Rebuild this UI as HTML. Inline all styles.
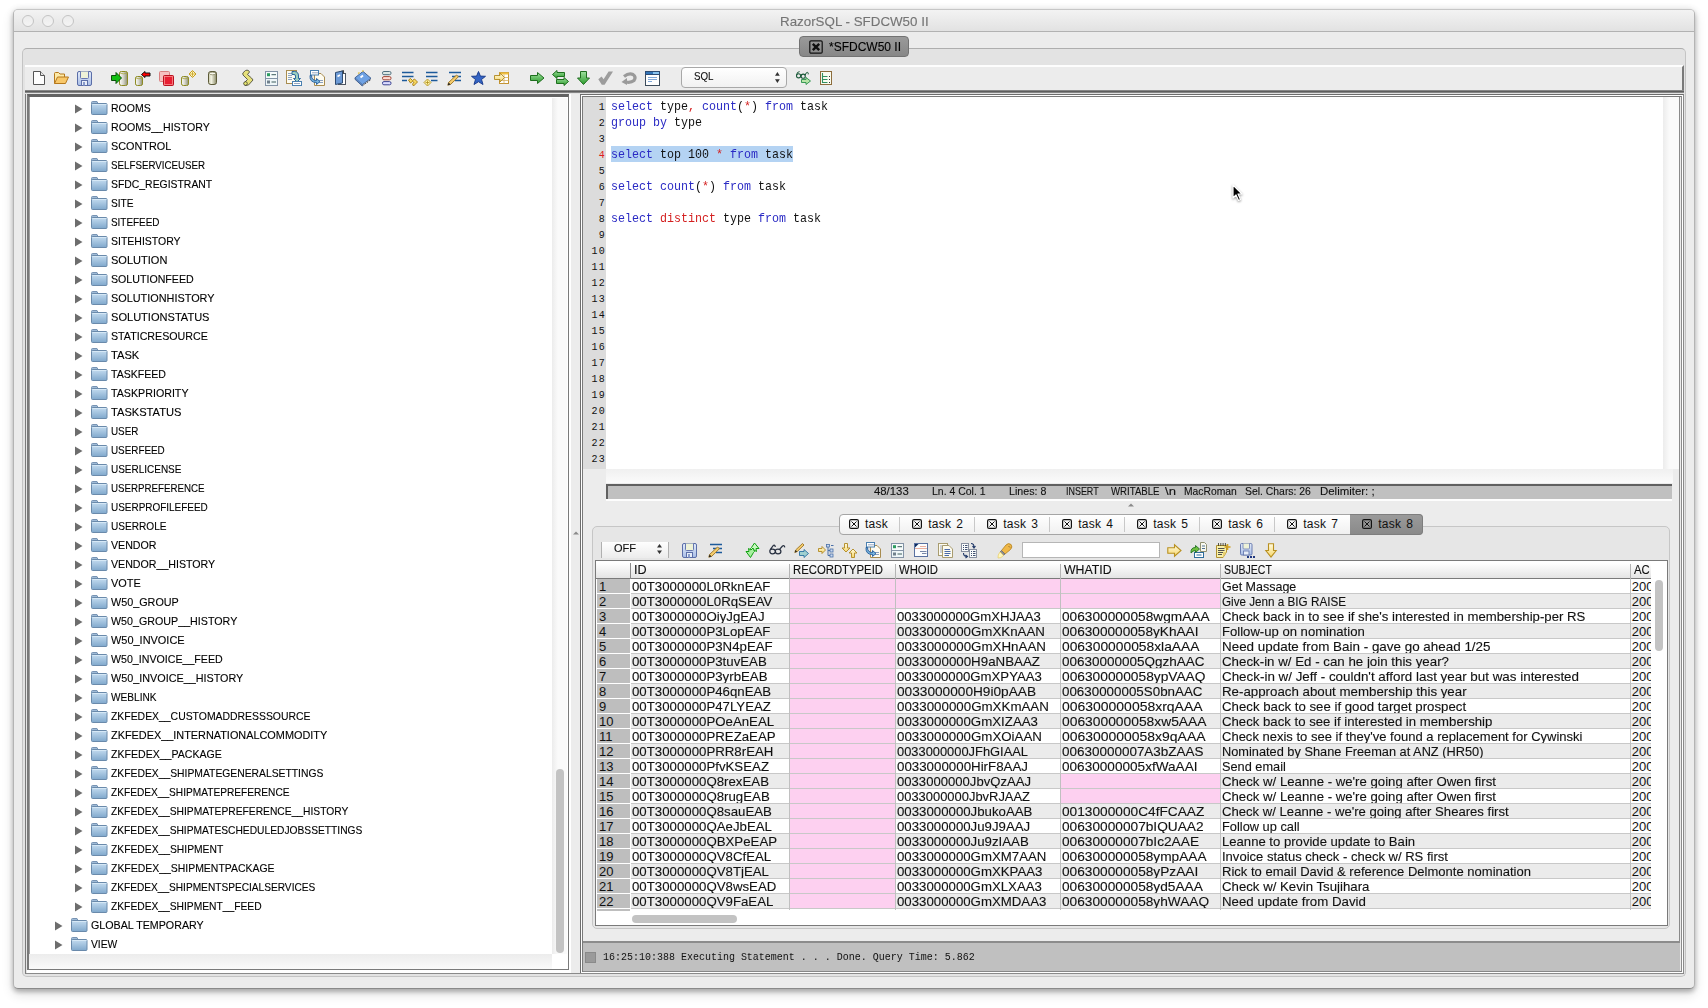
<!DOCTYPE html><html><head><meta charset="utf-8"><style>
html,body{margin:0;padding:0;background:#fff;width:1708px;height:1008px;overflow:hidden;position:relative}
div{box-sizing:border-box}
svg{position:absolute;overflow:visible}
path:not([fill]){fill:none}
</style></head><body>
<div style="position:absolute;left:13px;top:9px;width:1682px;height:980px;background:#ececec;border:1px solid #b4b4b4;border-top-color:#c6c6c6;border-bottom-color:#8a8a8a;border-radius:5px;box-shadow:0 3px 4px rgba(0,0,0,0.2),0 5px 12px rgba(0,0,0,0.14),0 0 7px rgba(0,0,0,0.1)"></div>
<div style="position:absolute;left:14px;top:10px;width:1680px;height:22px;background:linear-gradient(#f3f3f3,#e2e2e2);border-bottom:1px solid #b2b2b2;border-radius:4px 4px 0 0"></div>
<div style="position:absolute;left:22px;top:15px;width:12px;height:12px;border:1px solid #c4c4c4;border-radius:50%;background:linear-gradient(#ececec,#f4f4f4)"></div>
<div style="position:absolute;left:42px;top:15px;width:12px;height:12px;border:1px solid #c4c4c4;border-radius:50%;background:linear-gradient(#ececec,#f4f4f4)"></div>
<div style="position:absolute;left:62px;top:15px;width:12px;height:12px;border:1px solid #c4c4c4;border-radius:50%;background:linear-gradient(#ececec,#f4f4f4)"></div>
<div style="position:absolute;left:779.5px;top:14.73px;font:13px/1 'Liberation Sans',sans-serif;color:#747474;white-space:pre;transform:scaleX(1.0268);transform-origin:0 0;-webkit-text-stroke:0.12px #747474">RazorSQL - SFDCW50 II</div>
<div style="position:absolute;left:22px;top:48px;width:1664px;height:929px;background:#e3e3e3;border:1px solid #c4c4c4;border-top-color:#aeaeae;border-radius:5px"></div>
<div style="position:absolute;left:799px;top:36px;width:110px;height:21px;background:linear-gradient(#9a9a9a,#878787);border:1px solid #727272;border-radius:4px"></div>
<div style="position:absolute;left:828.6px;top:40.64px;font:12px/1 'Liberation Sans',sans-serif;color:#000;white-space:pre;transform:scaleX(0.9998);transform-origin:0 0;-webkit-text-stroke:0.12px #000">*SFDCW50 II</div>
<svg style="left:809px;top:40px" width="14" height="14"><rect x="0.8" y="0.8" width="12.4" height="12.4" rx="1.2" fill="none" stroke="#111" stroke-width="1.2"/><path d="M3.8 3.8L10.2 10.2M10.2 3.8L3.8 10.2" stroke="#111" stroke-width="2.4"/></svg>
<div style="position:absolute;left:25px;top:65px;width:1659px;height:26px;background:#ececec;border-top:2px solid #fdfdfd;border-right:2px solid #7a7a7a"></div>
<div style="position:absolute;left:681px;top:67px;width:106px;height:21px;background:linear-gradient(#ffffff,#f1f1f1);border:1px solid #a8a8a8;border-radius:4px"></div>
<div style="position:absolute;left:693.6px;top:71.05px;font:11px/1 'Liberation Sans',sans-serif;color:#111;white-space:pre;transform:scaleX(0.8859);transform-origin:0 0;-webkit-text-stroke:0.12px #111">SQL</div>
<svg width="0" height="0" style="position:absolute"><defs>
<linearGradient id="cyl" x1="0" x2="1" y1="0" y2="0"><stop offset="0" stop-color="#fdfdf4"/><stop offset="0.45" stop-color="#d8d8d0"/><stop offset="1" stop-color="#8e8e70"/></linearGradient>
<linearGradient id="cyl2" x1="0" x2="1" y1="0" y2="0"><stop offset="0" stop-color="#c8c8a8"/><stop offset="0.35" stop-color="#f4f4e4"/><stop offset="1" stop-color="#8a8a68"/></linearGradient>
<linearGradient id="grn" x1="0" x2="0" y1="0" y2="1"><stop offset="0" stop-color="#9ee09e"/><stop offset="1" stop-color="#2c9c2c"/></linearGradient>
<linearGradient id="sav" x1="0" x2="0" y1="0" y2="1"><stop offset="0" stop-color="#e4ecfa"/><stop offset="1" stop-color="#a8bde6"/></linearGradient>
<linearGradient id="yel" x1="0" x2="0" y1="0" y2="1"><stop offset="0" stop-color="#fffbe0"/><stop offset="1" stop-color="#f6d66a"/></linearGradient>
<linearGradient id="fg" x1="0" x2="0" y1="0" y2="1"><stop offset="0" stop-color="#c4dcf0"/><stop offset="1" stop-color="#80a8cc"/></linearGradient>
<g id="fold"><path d="M0.5 3V1.5Q0.5 0.5 1.5 0.5H6L7 2.5H1Z" fill="#a0bcd8" stroke="#7793b3"/><rect x="0.5" y="2.5" width="15.5" height="11" rx="1" fill="url(#fg)" stroke="#6a8aab"/><path d="M1.5 3.5H15.5" stroke="#dcecf8" stroke-width="0.8"/></g>
</defs></svg>
<svg style="left:33px;top:71px" width="12" height="14" viewBox="0 0 12 14"><path d="M0.5 0.5H7.5L11.5 4.5V13.5H0.5Z" fill="#fdfdfd" stroke="#555"/><path d="M7.5 0.5V4.5H11.5" fill="#e4e4e4" stroke="#555"/></svg>
<svg style="left:54px;top:72px" width="15" height="12" viewBox="0 0 15 12"><path d="M0.5 11.5V1.5Q0.5 0.5 1.5 0.5H4.5L6 2H10.5V5" fill="#fdeaa8" stroke="#b5781c"/><path d="M0.5 11.5L3.5 5H14.5L11.5 11.5Z" fill="#f8c86a" stroke="#b5781c"/></svg>
<svg style="left:77px;top:71px" width="15" height="15" viewBox="0 0 15 15"><rect x="0.5" y="0.5" width="14" height="14" rx="1.5" fill="url(#sav)" stroke="#5b6ea8"/><path d="M3.5 0.5V6.5Q3.5 7.5 4.5 7.5H10.5Q11.5 7.5 11.5 6.5V0.5" fill="#eef2d8" stroke="#6878b0"/><rect x="4.5" y="9.5" width="6" height="5" fill="#e8eef8" stroke="#5b6ea8"/><rect x="6" y="11" width="2" height="3.5" fill="#8a9ccc"/></svg>
<svg style="left:111px;top:70px" width="18" height="16" viewBox="0 0 18 16"><rect x="8.5" y="1.5" width="8" height="14" rx="2" ry="1.6" fill="url(#cyl)" stroke="#8c8a22"/><path d="M9.2 3.2Q12.5 4.4 15.8 3.2" fill="none" stroke="#a8a640" stroke-width="0.8"/><path d="M0.5 5.5H5V2.5L10.5 8L5 13.5V10.5H0.5Z" fill="#12c012" stroke="#0b4f0b"/></svg>
<svg style="left:135px;top:71px" width="16" height="16" viewBox="0 0 16 16"><rect x="0.5" y="5.5" width="7" height="9" rx="2" ry="1.6" fill="url(#cyl)" stroke="#8c8a22"/><path d="M1.2 7.2Q4.0 8.4 6.8 7.2" fill="none" stroke="#a8a640" stroke-width="0.8"/><path d="M6.5 3.5L10 0.5V2H15V5H10V6.5Z" fill="#f00" stroke="#111"/></svg>
<svg style="left:159px;top:71px" width="15" height="15" viewBox="0 0 15 15"><rect x="0.5" y="0.5" width="10" height="10" rx="1" fill="#f6c0c0" stroke="#d88080"/><rect x="4.5" y="4.5" width="10" height="10" rx="1" fill="#e81e32" stroke="#b8101e"/><rect x="5.5" y="5.5" width="8" height="8" fill="none" stroke="#f89090" stroke-width="0.8"/></svg>
<svg style="left:181px;top:70px" width="16" height="16" viewBox="0 0 16 16"><rect x="0.5" y="6.5" width="7" height="9" rx="2" ry="1.6" fill="url(#cyl)" stroke="#8c8a22"/><path d="M1.2 8.2Q4.0 9.4 6.8 8.2" fill="none" stroke="#a8a640" stroke-width="0.8"/><path d="M11.5 0.5L15 4L11.5 7.5L8 4Z" fill="#fff8c8" stroke="#c8a020"/><path d="M11.5 1.5V6.5M9 4H14" stroke="#c8a020" stroke-width="0.8"/></svg>
<svg style="left:208px;top:71px" width="9" height="14" viewBox="0 0 9 14"><rect x="0.5" y="0.5" width="8" height="13" rx="2.5" ry="2" fill="url(#cyl2)" stroke="#5c5a38"/><ellipse cx="4.5" cy="2.5" rx="3" ry="1.3" fill="#f8f8ec" stroke="#7c7a58" stroke-width="0.7"/></svg>
<svg style="left:242px;top:70px" width="12" height="16" viewBox="0 0 12 16"><path d="M3.5 0.5Q5 -0.2 6.5 0.5L7.5 2L5.5 4.5L9.5 8L11 10L6.5 15L3 15.5L2 13L5.5 9.5L1 5L0.8 3Z" fill="#e6e07a" stroke="#505040" stroke-width="0.9"/><circle cx="3.5" cy="13.5" r="1.8" fill="#e8e870" stroke="#404030" stroke-width="0.8"/></svg>
<svg style="left:265px;top:71px" width="13" height="15" viewBox="0 0 13 15"><rect x="0.5" y="0.5" width="12" height="7" fill="#f6fbfb" stroke="#8393a6"/><rect x="0.5" y="7.5" width="12" height="7" fill="#eef6f8" stroke="#8393a6"/><rect x="2" y="2.2" width="3" height="3" fill="#2c9c60"/><rect x="2" y="9.5" width="3" height="3" fill="#70808c"/><path d="M6.5 3.7H11M6.5 11H11" stroke="#3c5c5c"/></svg>
<svg style="left:286px;top:70px" width="16" height="16" viewBox="0 0 16 16"><rect x="0.5" y="0.5" width="10" height="13" fill="#fdfbf0" stroke="#a88c50"/><path d="M2 3.5H6M2 5.5H6M2 7.5H6M2 9.5H6" stroke="#8aa4c4"/><path d="M6 1.5H8.5Q12.5 1.5 12.5 6V8.5H14.5L11 12L7.5 8.5H9.5V6Q9.5 4.5 8 4.5H6Z" fill="#9cd0c0" stroke="#1a5a9a" stroke-width="0.9"/><rect x="6.5" y="11.5" width="9" height="4" fill="#fff" stroke="#4a80b0"/><path d="M8.5 13.5h1M10.5 13.5h1M12.5 13.5h1" stroke="#305080"/></svg>
<svg style="left:310px;top:70px" width="16" height="16" viewBox="0 0 16 16"><path d="M4.5 3.5H11L14.5 7V15.5H4.5Z" fill="#fdfbf0" stroke="#a88c50"/><path d="M9 10.5H13M9 12.5H13" stroke="#8aa0c0"/><rect x="0.5" y="0.5" width="8" height="4.5" fill="#fff" stroke="#4a80b0"/><path d="M2.5 2.8h1M4.5 2.8h1M6.5 2.8h1" stroke="#305080"/><path d="M1.5 5.5Q1.5 10.5 6.5 10.5V8.5L10 11.5L6.5 14.5V12.5Q-0.5 12.5 0 5.5Z" fill="#78b4dc" stroke="#1f5898" stroke-width="0.9"/></svg>
<svg style="left:335px;top:70px" width="11" height="15" viewBox="0 0 11 15"><rect x="3.5" y="3.5" width="7" height="11" fill="#fff" stroke="#4c5460"/><path d="M3.5 2.5L8.5 0.5V3.5" fill="none" stroke="#444"/><path d="M0.5 2.5L7.5 1V13L0.5 14.5Z" fill="#6c9ad6" stroke="#2c4a70"/><path d="M2.5 6.5L5 5" stroke="#fff" stroke-width="1.6"/></svg>
<svg style="left:354px;top:70px" width="18" height="16" viewBox="0 0 18 16"><path d="M1 7.8L9 1.4L17 8.3L8.3 14.7Z" fill="#6fa2e4" stroke="#3a5a8c" stroke-width="0.9"/><path d="M1 7.8V9.3L8.3 16V14.7" fill="#5a86c4" stroke="#3a5a8c" stroke-width="0.9"/><path d="M9.5 15L17 9.5" stroke="#222" stroke-width="1" stroke-dasharray="1.2 1"/><path d="M6.5 7.5L9 5.5" stroke="#fff" stroke-width="1.8"/><path d="M4 3.5l1.5 -1M8 1.5l1.5 -1" stroke="#e0c040" stroke-width="1.2"/></svg>
<svg style="left:382px;top:71px" width="10" height="15" viewBox="0 0 10 15"><rect x="0.5" y="0.5" width="8.5" height="3.2" rx="1.4" fill="#dce8e4" stroke="#4e6e7e"/><rect x="0.5" y="5.6" width="8.5" height="3.2" rx="1.4" fill="#ffdcd4" stroke="#a04838"/><rect x="0.5" y="10.6" width="8.5" height="3.2" rx="1.4" fill="#dcdcff" stroke="#3c4490"/></svg>
<svg style="left:402px;top:71px" width="16" height="16" viewBox="0 0 16 16"><path d="M0 1.5H11.5M0 5.5H11.5M0 9.5H5" stroke="#1c5a9a" stroke-width="1.7"/><path d="M6.5 9L8.5 7.5L10.5 9.5L12.5 8L15.5 11L11.5 15L10.5 13L12 11.5L10.5 10.5L8.5 12Z" fill="#f8d860" stroke="#a07810" stroke-width="0.9"/></svg>
<svg style="left:424px;top:71px" width="14" height="16" viewBox="0 0 14 16"><path d="M2 1.5H13.5M2 5.5H13.5M7 9.5H13.5" stroke="#1c5a9a" stroke-width="1.7"/><path d="M3.5 8L7 11.5L3.5 15L0 11.5Z" fill="#fff4a8" stroke="#b09020" stroke-width="0.9"/><path d="M3.5 9.5V13.5M1.5 11.5H5.5" stroke="#b09020" stroke-width="0.8"/></svg>
<svg style="left:447px;top:71px" width="15" height="15" viewBox="0 0 15 15"><path d="M2 1.5H14M5 5.5H14M8 9.5H14" stroke="#1c5a9a" stroke-width="1.7"/><path d="M0.8 14.2L1.6 11.4L9.6 4L11.4 5.8L3.6 13.4Z" fill="#f4cc6c" stroke="#9c7424" stroke-width="0.9"/><path d="M0.8 14.2L1.6 11.4L3.6 13.4Z" fill="#222"/></svg>
<svg style="left:471px;top:71px" width="15" height="14" viewBox="0 0 15 14"><path d="M7.5 0.5L9.4 5.1L14.5 5.3L10.5 8.5L12 13.5L7.5 10.7L3 13.5L4.5 8.5L0.5 5.3L5.6 5.1Z" fill="#3464c4" stroke="#1e3f8f"/></svg>
<svg style="left:494px;top:72px" width="15" height="12" viewBox="0 0 15 12"><rect x="5.5" y="0.5" width="9" height="11" fill="#fff" stroke="#c49434"/><rect x="5.5" y="0.5" width="9" height="2" fill="#f0c040"/><path d="M5.5 5.5H14.5M5.5 8.5H14.5M10 2.5V11.5" stroke="#d4b064" stroke-width="0.8"/><path d="M0.5 3.5H6V1L10.5 5.5L6 10V7.5H0.5Z" fill="url(#yel)" stroke="#b08820" stroke-width="0.9"/></svg>
<svg style="left:530px;top:72px" width="15" height="12" viewBox="0 0 15 12"><path d="M0.5 3.5H7.5V0.5L14 6L7.5 11.5V8.5H0.5Z" fill="url(#grn)" stroke="#1e6e1e"/></svg>
<svg style="left:552px;top:70px" width="17" height="16" viewBox="0 0 17 16"><path d="M0.5 4.5L5 0.5V2.5H12.5V6.5H5V8.5Z" fill="url(#grn)" stroke="#1e6e1e"/><path d="M16.5 11.5L12 7.5V9.5H4.5V13.5H12V15.5Z" fill="url(#grn)" stroke="#1e6e1e"/></svg>
<svg style="left:577px;top:71px" width="13" height="14" viewBox="0 0 13 14"><path d="M3.5 0.5H9.5V7H12.5L6.5 13.5L0.5 7H3.5Z" fill="url(#grn)" stroke="#1e6e1e"/></svg>
<svg style="left:598px;top:71px" width="15" height="14" viewBox="0 0 15 14"><path d="M0.3 8.2L3.6 5.6L5.6 8.2L10.6 0.4H15L6.6 13.8H3.8Z" fill="#9c9c9c"/></svg>
<svg style="left:621px;top:71px" width="16" height="14" viewBox="0 0 16 14"><path d="M3 5.5Q8 1.5 12 3.5Q15.5 6 13 9.5Q10 12 5 11" stroke="#9a9a9a" stroke-width="3.2" fill="none"/><path d="M0.5 11L6 7V14Z" fill="#9a9a9a"/></svg>
<svg style="left:645px;top:71px" width="15" height="15" viewBox="0 0 15 15"><rect x="0.5" y="0.5" width="14" height="14" fill="#fff" stroke="#3c4c5c"/><rect x="0.5" y="0.5" width="14" height="3" fill="#3274b8" stroke="#2c4c74"/><rect x="8" y="1" width="6" height="2" fill="#88c4f0"/><path d="M3 6.5H12M3 8.5H12M3 10.5H7" stroke="#80a8d8"/></svg>
<svg style="left:775px;top:72px" width="5" height="11" viewBox="0 0 5 11"><path d="M0 3.7L2.4 0L4.8 3.7Z M0 7.2L2.4 11L4.8 7.2Z" fill="#333"/></svg>
<svg style="left:796px;top:70px" width="16" height="15" viewBox="0 0 16 15"><circle cx="2.6" cy="5.8" r="2.1" fill="none" stroke="#1c5a3a" stroke-width="1.1"/><circle cx="7.2" cy="6.2" r="2.1" fill="none" stroke="#1c5a3a" stroke-width="1.1"/><path d="M0.6 5.2Q0.8 1.6 3.6 1.6M4.8 5.3Q5.3 4.3 5.9 5M9.2 5.2Q10 2 11.6 2.3Q12.5 2.8 12.2 4.4" fill="none" stroke="#1c5a3a" stroke-width="1"/><path d="M5.5 9.5H10V7.5L14.5 11L10 14.5V12.5H5.5Z" fill="#b8e4a8" stroke="#28904a" stroke-width="0.9"/></svg>
<svg style="left:820px;top:71px" width="12" height="14" viewBox="0 0 12 14"><rect x="0.5" y="0.5" width="11" height="13" fill="#fafcf0" stroke="#8c6c3c"/><path d="M2.5 2V11.5H7.5M2.5 5.5H7.5M2.5 8.5H7.5" stroke="#309060" stroke-width="1.1"/><path d="M9 5.5h1M9 8.5h1M9 11.5h1" stroke="#303030"/></svg>
<div style="position:absolute;left:25px;top:90px;width:1659px;height:3px;background:linear-gradient(#9a9a9a,#5e5e5e,#9a9a9a)"></div>
<div style="position:absolute;left:25px;top:94px;width:1659px;height:880px;border:1px solid #7c7c7c;border-bottom-color:#8a8a8a;border-top:none;background:#ececec"></div>
<div style="position:absolute;left:26px;top:94px;width:545px;height:879px;background:#fff"></div>
<div style="position:absolute;left:26px;top:94px;width:1px;height:879px;background:#e6e6e6"></div>
<div style="position:absolute;left:27px;top:94px;width:542px;height:876px;border-top:3px solid #636363;border-left:2px solid #7a7a7a;box-shadow:inset 1px 0 0 #a0a0a0;border-bottom:1px solid #7a7a7a;border-right:1px solid #7a7a7a;background:#fff"></div>
<div style="position:absolute;left:552px;top:98px;width:15px;height:856px;background:linear-gradient(90deg,#ececec,#fafafa 40%,#fafafa)"></div>
<div style="position:absolute;left:556px;top:769px;width:8px;height:184px;background:#c3c3c3;border-radius:4px"></div>
<div style="position:absolute;left:29px;top:954px;width:523px;height:15px;background:linear-gradient(#ececec,#fafafa)"></div>
<svg style="left:75px;top:104px" width="8" height="10"><path d="M0 0.5L7.5 5L0 9.5Z" fill="#6d6d6d"/></svg>
<svg style="left:91px;top:101px" width="17" height="15"><use href="#fold"/></svg>
<div style="position:absolute;left:110.6px;top:103.05px;font:11px/1 'Liberation Sans',sans-serif;color:#000;white-space:pre;transform:scaleX(0.9553);transform-origin:0 0;-webkit-text-stroke:0.12px #000">ROOMS</div>
<svg style="left:75px;top:123px" width="8" height="10"><path d="M0 0.5L7.5 5L0 9.5Z" fill="#6d6d6d"/></svg>
<svg style="left:91px;top:120px" width="17" height="15"><use href="#fold"/></svg>
<div style="position:absolute;left:110.6px;top:122.05px;font:11px/1 'Liberation Sans',sans-serif;color:#000;white-space:pre;transform:scaleX(0.9659);transform-origin:0 0;-webkit-text-stroke:0.12px #000">ROOMS__HISTORY</div>
<svg style="left:75px;top:142px" width="8" height="10"><path d="M0 0.5L7.5 5L0 9.5Z" fill="#6d6d6d"/></svg>
<svg style="left:91px;top:139px" width="17" height="15"><use href="#fold"/></svg>
<div style="position:absolute;left:110.6px;top:141.04px;font:11px/1 'Liberation Sans',sans-serif;color:#000;white-space:pre;transform:scaleX(0.9850);transform-origin:0 0;-webkit-text-stroke:0.12px #000">SCONTROL</div>
<svg style="left:75px;top:161px" width="8" height="10"><path d="M0 0.5L7.5 5L0 9.5Z" fill="#6d6d6d"/></svg>
<svg style="left:91px;top:158px" width="17" height="15"><use href="#fold"/></svg>
<div style="position:absolute;left:110.6px;top:160.04px;font:11px/1 'Liberation Sans',sans-serif;color:#000;white-space:pre;transform:scaleX(0.8863);transform-origin:0 0;-webkit-text-stroke:0.12px #000">SELFSERVICEUSER</div>
<svg style="left:75px;top:180px" width="8" height="10"><path d="M0 0.5L7.5 5L0 9.5Z" fill="#6d6d6d"/></svg>
<svg style="left:91px;top:177px" width="17" height="15"><use href="#fold"/></svg>
<div style="position:absolute;left:110.6px;top:179.04px;font:11px/1 'Liberation Sans',sans-serif;color:#000;white-space:pre;transform:scaleX(0.9462);transform-origin:0 0;-webkit-text-stroke:0.12px #000">SFDC_REGISTRANT</div>
<svg style="left:75px;top:199px" width="8" height="10"><path d="M0 0.5L7.5 5L0 9.5Z" fill="#6d6d6d"/></svg>
<svg style="left:91px;top:196px" width="17" height="15"><use href="#fold"/></svg>
<div style="position:absolute;left:110.6px;top:198.04px;font:11px/1 'Liberation Sans',sans-serif;color:#000;white-space:pre;transform:scaleX(0.9202);transform-origin:0 0;-webkit-text-stroke:0.12px #000">SITE</div>
<svg style="left:75px;top:218px" width="8" height="10"><path d="M0 0.5L7.5 5L0 9.5Z" fill="#6d6d6d"/></svg>
<svg style="left:91px;top:215px" width="17" height="15"><use href="#fold"/></svg>
<div style="position:absolute;left:110.6px;top:217.04px;font:11px/1 'Liberation Sans',sans-serif;color:#000;white-space:pre;transform:scaleX(0.9017);transform-origin:0 0;-webkit-text-stroke:0.12px #000">SITEFEED</div>
<svg style="left:75px;top:237px" width="8" height="10"><path d="M0 0.5L7.5 5L0 9.5Z" fill="#6d6d6d"/></svg>
<svg style="left:91px;top:234px" width="17" height="15"><use href="#fold"/></svg>
<div style="position:absolute;left:110.6px;top:236.04px;font:11px/1 'Liberation Sans',sans-serif;color:#000;white-space:pre;transform:scaleX(0.9541);transform-origin:0 0;-webkit-text-stroke:0.12px #000">SITEHISTORY</div>
<svg style="left:75px;top:256px" width="8" height="10"><path d="M0 0.5L7.5 5L0 9.5Z" fill="#6d6d6d"/></svg>
<svg style="left:91px;top:253px" width="17" height="15"><use href="#fold"/></svg>
<div style="position:absolute;left:110.6px;top:255.04px;font:11px/1 'Liberation Sans',sans-serif;color:#000;white-space:pre;transform:scaleX(1.0030);transform-origin:0 0;-webkit-text-stroke:0.12px #000">SOLUTION</div>
<svg style="left:75px;top:275px" width="8" height="10"><path d="M0 0.5L7.5 5L0 9.5Z" fill="#6d6d6d"/></svg>
<svg style="left:91px;top:272px" width="17" height="15"><use href="#fold"/></svg>
<div style="position:absolute;left:110.6px;top:274.05px;font:11px/1 'Liberation Sans',sans-serif;color:#000;white-space:pre;transform:scaleX(0.9665);transform-origin:0 0;-webkit-text-stroke:0.12px #000">SOLUTIONFEED</div>
<svg style="left:75px;top:294px" width="8" height="10"><path d="M0 0.5L7.5 5L0 9.5Z" fill="#6d6d6d"/></svg>
<svg style="left:91px;top:291px" width="17" height="15"><use href="#fold"/></svg>
<div style="position:absolute;left:110.6px;top:293.05px;font:11px/1 'Liberation Sans',sans-serif;color:#000;white-space:pre;transform:scaleX(0.9883);transform-origin:0 0;-webkit-text-stroke:0.12px #000">SOLUTIONHISTORY</div>
<svg style="left:75px;top:313px" width="8" height="10"><path d="M0 0.5L7.5 5L0 9.5Z" fill="#6d6d6d"/></svg>
<svg style="left:91px;top:310px" width="17" height="15"><use href="#fold"/></svg>
<div style="position:absolute;left:110.6px;top:312.05px;font:11px/1 'Liberation Sans',sans-serif;color:#000;white-space:pre;transform:scaleX(1.0052);transform-origin:0 0;-webkit-text-stroke:0.12px #000">SOLUTIONSTATUS</div>
<svg style="left:75px;top:332px" width="8" height="10"><path d="M0 0.5L7.5 5L0 9.5Z" fill="#6d6d6d"/></svg>
<svg style="left:91px;top:329px" width="17" height="15"><use href="#fold"/></svg>
<div style="position:absolute;left:110.6px;top:331.05px;font:11px/1 'Liberation Sans',sans-serif;color:#000;white-space:pre;transform:scaleX(0.9697);transform-origin:0 0;-webkit-text-stroke:0.12px #000">STATICRESOURCE</div>
<svg style="left:75px;top:351px" width="8" height="10"><path d="M0 0.5L7.5 5L0 9.5Z" fill="#6d6d6d"/></svg>
<svg style="left:91px;top:348px" width="17" height="15"><use href="#fold"/></svg>
<div style="position:absolute;left:110.6px;top:350.05px;font:11px/1 'Liberation Sans',sans-serif;color:#000;white-space:pre;transform:scaleX(1.0138);transform-origin:0 0;-webkit-text-stroke:0.12px #000">TASK</div>
<svg style="left:75px;top:370px" width="8" height="10"><path d="M0 0.5L7.5 5L0 9.5Z" fill="#6d6d6d"/></svg>
<svg style="left:91px;top:367px" width="17" height="15"><use href="#fold"/></svg>
<div style="position:absolute;left:110.6px;top:369.05px;font:11px/1 'Liberation Sans',sans-serif;color:#000;white-space:pre;transform:scaleX(0.9606);transform-origin:0 0;-webkit-text-stroke:0.12px #000">TASKFEED</div>
<svg style="left:75px;top:389px" width="8" height="10"><path d="M0 0.5L7.5 5L0 9.5Z" fill="#6d6d6d"/></svg>
<svg style="left:91px;top:386px" width="17" height="15"><use href="#fold"/></svg>
<div style="position:absolute;left:110.6px;top:388.05px;font:11px/1 'Liberation Sans',sans-serif;color:#000;white-space:pre;transform:scaleX(0.9704);transform-origin:0 0;-webkit-text-stroke:0.12px #000">TASKPRIORITY</div>
<svg style="left:75px;top:408px" width="8" height="10"><path d="M0 0.5L7.5 5L0 9.5Z" fill="#6d6d6d"/></svg>
<svg style="left:91px;top:405px" width="17" height="15"><use href="#fold"/></svg>
<div style="position:absolute;left:110.6px;top:407.05px;font:11px/1 'Liberation Sans',sans-serif;color:#000;white-space:pre;transform:scaleX(1.0104);transform-origin:0 0;-webkit-text-stroke:0.12px #000">TASKSTATUS</div>
<svg style="left:75px;top:427px" width="8" height="10"><path d="M0 0.5L7.5 5L0 9.5Z" fill="#6d6d6d"/></svg>
<svg style="left:91px;top:424px" width="17" height="15"><use href="#fold"/></svg>
<div style="position:absolute;left:110.6px;top:426.05px;font:11px/1 'Liberation Sans',sans-serif;color:#000;white-space:pre;transform:scaleX(0.8965);transform-origin:0 0;-webkit-text-stroke:0.12px #000">USER</div>
<svg style="left:75px;top:446px" width="8" height="10"><path d="M0 0.5L7.5 5L0 9.5Z" fill="#6d6d6d"/></svg>
<svg style="left:91px;top:443px" width="17" height="15"><use href="#fold"/></svg>
<div style="position:absolute;left:110.6px;top:445.05px;font:11px/1 'Liberation Sans',sans-serif;color:#000;white-space:pre;transform:scaleX(0.8965);transform-origin:0 0;-webkit-text-stroke:0.12px #000">USERFEED</div>
<svg style="left:75px;top:465px" width="8" height="10"><path d="M0 0.5L7.5 5L0 9.5Z" fill="#6d6d6d"/></svg>
<svg style="left:91px;top:462px" width="17" height="15"><use href="#fold"/></svg>
<div style="position:absolute;left:110.6px;top:464.05px;font:11px/1 'Liberation Sans',sans-serif;color:#000;white-space:pre;transform:scaleX(0.9068);transform-origin:0 0;-webkit-text-stroke:0.12px #000">USERLICENSE</div>
<svg style="left:75px;top:484px" width="8" height="10"><path d="M0 0.5L7.5 5L0 9.5Z" fill="#6d6d6d"/></svg>
<svg style="left:91px;top:481px" width="17" height="15"><use href="#fold"/></svg>
<div style="position:absolute;left:110.6px;top:483.05px;font:11px/1 'Liberation Sans',sans-serif;color:#000;white-space:pre;transform:scaleX(0.8851);transform-origin:0 0;-webkit-text-stroke:0.12px #000">USERPREFERENCE</div>
<svg style="left:75px;top:503px" width="8" height="10"><path d="M0 0.5L7.5 5L0 9.5Z" fill="#6d6d6d"/></svg>
<svg style="left:91px;top:500px" width="17" height="15"><use href="#fold"/></svg>
<div style="position:absolute;left:110.6px;top:502.05px;font:11px/1 'Liberation Sans',sans-serif;color:#000;white-space:pre;transform:scaleX(0.9049);transform-origin:0 0;-webkit-text-stroke:0.12px #000">USERPROFILEFEED</div>
<svg style="left:75px;top:522px" width="8" height="10"><path d="M0 0.5L7.5 5L0 9.5Z" fill="#6d6d6d"/></svg>
<svg style="left:91px;top:519px" width="17" height="15"><use href="#fold"/></svg>
<div style="position:absolute;left:110.6px;top:521.04px;font:11px/1 'Liberation Sans',sans-serif;color:#000;white-space:pre;transform:scaleX(0.9171);transform-origin:0 0;-webkit-text-stroke:0.12px #000">USERROLE</div>
<svg style="left:75px;top:541px" width="8" height="10"><path d="M0 0.5L7.5 5L0 9.5Z" fill="#6d6d6d"/></svg>
<svg style="left:91px;top:538px" width="17" height="15"><use href="#fold"/></svg>
<div style="position:absolute;left:110.6px;top:540.04px;font:11px/1 'Liberation Sans',sans-serif;color:#000;white-space:pre;transform:scaleX(0.9668);transform-origin:0 0;-webkit-text-stroke:0.12px #000">VENDOR</div>
<svg style="left:75px;top:560px" width="8" height="10"><path d="M0 0.5L7.5 5L0 9.5Z" fill="#6d6d6d"/></svg>
<svg style="left:91px;top:557px" width="17" height="15"><use href="#fold"/></svg>
<div style="position:absolute;left:110.6px;top:559.04px;font:11px/1 'Liberation Sans',sans-serif;color:#000;white-space:pre;transform:scaleX(0.9666);transform-origin:0 0;-webkit-text-stroke:0.12px #000">VENDOR__HISTORY</div>
<svg style="left:75px;top:579px" width="8" height="10"><path d="M0 0.5L7.5 5L0 9.5Z" fill="#6d6d6d"/></svg>
<svg style="left:91px;top:576px" width="17" height="15"><use href="#fold"/></svg>
<div style="position:absolute;left:110.6px;top:578.04px;font:11px/1 'Liberation Sans',sans-serif;color:#000;white-space:pre;transform:scaleX(0.9917);transform-origin:0 0;-webkit-text-stroke:0.12px #000">VOTE</div>
<svg style="left:75px;top:598px" width="8" height="10"><path d="M0 0.5L7.5 5L0 9.5Z" fill="#6d6d6d"/></svg>
<svg style="left:91px;top:595px" width="17" height="15"><use href="#fold"/></svg>
<div style="position:absolute;left:110.6px;top:597.04px;font:11px/1 'Liberation Sans',sans-serif;color:#000;white-space:pre;transform:scaleX(0.9816);transform-origin:0 0;-webkit-text-stroke:0.12px #000">W50_GROUP</div>
<svg style="left:75px;top:617px" width="8" height="10"><path d="M0 0.5L7.5 5L0 9.5Z" fill="#6d6d6d"/></svg>
<svg style="left:91px;top:614px" width="17" height="15"><use href="#fold"/></svg>
<div style="position:absolute;left:110.6px;top:616.04px;font:11px/1 'Liberation Sans',sans-serif;color:#000;white-space:pre;transform:scaleX(0.9730);transform-origin:0 0;-webkit-text-stroke:0.12px #000">W50_GROUP__HISTORY</div>
<svg style="left:75px;top:636px" width="8" height="10"><path d="M0 0.5L7.5 5L0 9.5Z" fill="#6d6d6d"/></svg>
<svg style="left:91px;top:633px" width="17" height="15"><use href="#fold"/></svg>
<div style="position:absolute;left:110.6px;top:635.04px;font:11px/1 'Liberation Sans',sans-serif;color:#000;white-space:pre;transform:scaleX(0.9950);transform-origin:0 0;-webkit-text-stroke:0.12px #000">W50_INVOICE</div>
<svg style="left:75px;top:655px" width="8" height="10"><path d="M0 0.5L7.5 5L0 9.5Z" fill="#6d6d6d"/></svg>
<svg style="left:91px;top:652px" width="17" height="15"><use href="#fold"/></svg>
<div style="position:absolute;left:110.6px;top:654.04px;font:11px/1 'Liberation Sans',sans-serif;color:#000;white-space:pre;transform:scaleX(0.9668);transform-origin:0 0;-webkit-text-stroke:0.12px #000">W50_INVOICE__FEED</div>
<svg style="left:75px;top:674px" width="8" height="10"><path d="M0 0.5L7.5 5L0 9.5Z" fill="#6d6d6d"/></svg>
<svg style="left:91px;top:671px" width="17" height="15"><use href="#fold"/></svg>
<div style="position:absolute;left:110.6px;top:673.04px;font:11px/1 'Liberation Sans',sans-serif;color:#000;white-space:pre;transform:scaleX(0.9822);transform-origin:0 0;-webkit-text-stroke:0.12px #000">W50_INVOICE__HISTORY</div>
<svg style="left:75px;top:693px" width="8" height="10"><path d="M0 0.5L7.5 5L0 9.5Z" fill="#6d6d6d"/></svg>
<svg style="left:91px;top:690px" width="17" height="15"><use href="#fold"/></svg>
<div style="position:absolute;left:110.6px;top:692.04px;font:11px/1 'Liberation Sans',sans-serif;color:#000;white-space:pre;transform:scaleX(0.9190);transform-origin:0 0;-webkit-text-stroke:0.12px #000">WEBLINK</div>
<svg style="left:75px;top:712px" width="8" height="10"><path d="M0 0.5L7.5 5L0 9.5Z" fill="#6d6d6d"/></svg>
<svg style="left:91px;top:709px" width="17" height="15"><use href="#fold"/></svg>
<div style="position:absolute;left:110.6px;top:711.04px;font:11px/1 'Liberation Sans',sans-serif;color:#000;white-space:pre;transform:scaleX(0.9469);transform-origin:0 0;-webkit-text-stroke:0.12px #000">ZKFEDEX__CUSTOMADDRESSSOURCE</div>
<svg style="left:75px;top:731px" width="8" height="10"><path d="M0 0.5L7.5 5L0 9.5Z" fill="#6d6d6d"/></svg>
<svg style="left:91px;top:728px" width="17" height="15"><use href="#fold"/></svg>
<div style="position:absolute;left:110.6px;top:730.04px;font:11px/1 'Liberation Sans',sans-serif;color:#000;white-space:pre;transform:scaleX(0.9890);transform-origin:0 0;-webkit-text-stroke:0.12px #000">ZKFEDEX__INTERNATIONALCOMMODITY</div>
<svg style="left:75px;top:750px" width="8" height="10"><path d="M0 0.5L7.5 5L0 9.5Z" fill="#6d6d6d"/></svg>
<svg style="left:91px;top:747px" width="17" height="15"><use href="#fold"/></svg>
<div style="position:absolute;left:110.6px;top:749.04px;font:11px/1 'Liberation Sans',sans-serif;color:#000;white-space:pre;transform:scaleX(0.9607);transform-origin:0 0;-webkit-text-stroke:0.12px #000">ZKFEDEX__PACKAGE</div>
<svg style="left:75px;top:769px" width="8" height="10"><path d="M0 0.5L7.5 5L0 9.5Z" fill="#6d6d6d"/></svg>
<svg style="left:91px;top:766px" width="17" height="15"><use href="#fold"/></svg>
<div style="position:absolute;left:110.6px;top:768.04px;font:11px/1 'Liberation Sans',sans-serif;color:#000;white-space:pre;transform:scaleX(0.9400);transform-origin:0 0;-webkit-text-stroke:0.12px #000">ZKFEDEX__SHIPMATEGENERALSETTINGS</div>
<svg style="left:75px;top:788px" width="8" height="10"><path d="M0 0.5L7.5 5L0 9.5Z" fill="#6d6d6d"/></svg>
<svg style="left:91px;top:785px" width="17" height="15"><use href="#fold"/></svg>
<div style="position:absolute;left:110.6px;top:787.04px;font:11px/1 'Liberation Sans',sans-serif;color:#000;white-space:pre;transform:scaleX(0.9222);transform-origin:0 0;-webkit-text-stroke:0.12px #000">ZKFEDEX__SHIPMATEPREFERENCE</div>
<svg style="left:75px;top:807px" width="8" height="10"><path d="M0 0.5L7.5 5L0 9.5Z" fill="#6d6d6d"/></svg>
<svg style="left:91px;top:804px" width="17" height="15"><use href="#fold"/></svg>
<div style="position:absolute;left:110.6px;top:806.04px;font:11px/1 'Liberation Sans',sans-serif;color:#000;white-space:pre;transform:scaleX(0.9332);transform-origin:0 0;-webkit-text-stroke:0.12px #000">ZKFEDEX__SHIPMATEPREFERENCE__HISTORY</div>
<svg style="left:75px;top:826px" width="8" height="10"><path d="M0 0.5L7.5 5L0 9.5Z" fill="#6d6d6d"/></svg>
<svg style="left:91px;top:823px" width="17" height="15"><use href="#fold"/></svg>
<div style="position:absolute;left:110.6px;top:825.04px;font:11px/1 'Liberation Sans',sans-serif;color:#000;white-space:pre;transform:scaleX(0.9312);transform-origin:0 0;-webkit-text-stroke:0.12px #000">ZKFEDEX__SHIPMATESCHEDULEDJOBSSETTINGS</div>
<svg style="left:75px;top:845px" width="8" height="10"><path d="M0 0.5L7.5 5L0 9.5Z" fill="#6d6d6d"/></svg>
<svg style="left:91px;top:842px" width="17" height="15"><use href="#fold"/></svg>
<div style="position:absolute;left:110.6px;top:844.04px;font:11px/1 'Liberation Sans',sans-serif;color:#000;white-space:pre;transform:scaleX(0.9365);transform-origin:0 0;-webkit-text-stroke:0.12px #000">ZKFEDEX__SHIPMENT</div>
<svg style="left:75px;top:864px" width="8" height="10"><path d="M0 0.5L7.5 5L0 9.5Z" fill="#6d6d6d"/></svg>
<svg style="left:91px;top:861px" width="17" height="15"><use href="#fold"/></svg>
<div style="position:absolute;left:110.6px;top:863.04px;font:11px/1 'Liberation Sans',sans-serif;color:#000;white-space:pre;transform:scaleX(0.9496);transform-origin:0 0;-webkit-text-stroke:0.12px #000">ZKFEDEX__SHIPMENTPACKAGE</div>
<svg style="left:75px;top:883px" width="8" height="10"><path d="M0 0.5L7.5 5L0 9.5Z" fill="#6d6d6d"/></svg>
<svg style="left:91px;top:880px" width="17" height="15"><use href="#fold"/></svg>
<div style="position:absolute;left:110.6px;top:882.04px;font:11px/1 'Liberation Sans',sans-serif;color:#000;white-space:pre;transform:scaleX(0.9215);transform-origin:0 0;-webkit-text-stroke:0.12px #000">ZKFEDEX__SHIPMENTSPECIALSERVICES</div>
<svg style="left:75px;top:902px" width="8" height="10"><path d="M0 0.5L7.5 5L0 9.5Z" fill="#6d6d6d"/></svg>
<svg style="left:91px;top:899px" width="17" height="15"><use href="#fold"/></svg>
<div style="position:absolute;left:110.6px;top:901.04px;font:11px/1 'Liberation Sans',sans-serif;color:#000;white-space:pre;transform:scaleX(0.9332);transform-origin:0 0;-webkit-text-stroke:0.12px #000">ZKFEDEX__SHIPMENT__FEED</div>
<svg style="left:55px;top:921px" width="8" height="10"><path d="M0 0.5L7.5 5L0 9.5Z" fill="#6d6d6d"/></svg>
<svg style="left:71px;top:918px" width="17" height="15"><use href="#fold"/></svg>
<div style="position:absolute;left:90.6px;top:920.04px;font:11px/1 'Liberation Sans',sans-serif;color:#000;white-space:pre;transform:scaleX(0.9720);transform-origin:0 0;-webkit-text-stroke:0.12px #000">GLOBAL TEMPORARY</div>
<svg style="left:55px;top:940px" width="8" height="10"><path d="M0 0.5L7.5 5L0 9.5Z" fill="#6d6d6d"/></svg>
<svg style="left:71px;top:937px" width="17" height="15"><use href="#fold"/></svg>
<div style="position:absolute;left:90.6px;top:939.04px;font:11px/1 'Liberation Sans',sans-serif;color:#000;white-space:pre;transform:scaleX(0.9355);transform-origin:0 0;-webkit-text-stroke:0.12px #000">VIEW</div>
<div style="position:absolute;left:580px;top:94px;width:1104px;height:879px;border:1px solid #6e6e6e;border-right-color:#8a8a8a;border-bottom:none;background:#fff"></div>
<div style="position:absolute;left:582px;top:96px;width:1100px;height:876px;border:1px solid #7a7a7a;border-right-color:#8c8c8c;background:#ececec"></div>
<div style="position:absolute;left:1679px;top:97px;width:1px;height:845px;background:#8a8a8a"></div>
<div style="position:absolute;left:583px;top:97px;width:1096px;height:372px;background:#fff"></div>
<div style="position:absolute;left:583px;top:97px;width:23px;height:372px;background:#dcdcdc"></div>
<div style="position:absolute;left:1663px;top:97px;width:16px;height:372px;background:linear-gradient(90deg,#ececec,#fafafa 40%,#fafafa)"></div>
<div style="position:absolute;left:606px;top:469px;width:1067px;height:14px;background:linear-gradient(#f0f0f0,#fbfbfb)"></div>
<div style="position:absolute;left:611px;top:146px;width:182px;height:16px;background:#b4d3f3"></div>
<div style="position:absolute;left:570px;width:36px;text-align:right;top:102.60px;font:10px/1 'Liberation Mono',monospace;letter-spacing:1.2px;color:#111">1</div>
<div class="cd" style="top:100.22px"><b>select</b> type<r>,</r> <b>count</b>(<r>*</r>) <b>from</b> task</div>
<div style="position:absolute;left:570px;width:36px;text-align:right;top:118.60px;font:10px/1 'Liberation Mono',monospace;letter-spacing:1.2px;color:#111">2</div>
<div class="cd" style="top:116.22px"><b>group</b> <b>by</b> type</div>
<div style="position:absolute;left:570px;width:36px;text-align:right;top:134.60px;font:10px/1 'Liberation Mono',monospace;letter-spacing:1.2px;color:#111">3</div>
<div style="position:absolute;left:570px;width:36px;text-align:right;top:150.60px;font:10px/1 'Liberation Mono',monospace;letter-spacing:1.2px;color:#e02020">4</div>
<div class="cd" style="top:148.22px"><b>select</b> top 100 <r>*</r> <b>from</b> task</div>
<div style="position:absolute;left:570px;width:36px;text-align:right;top:166.60px;font:10px/1 'Liberation Mono',monospace;letter-spacing:1.2px;color:#111">5</div>
<div style="position:absolute;left:570px;width:36px;text-align:right;top:182.60px;font:10px/1 'Liberation Mono',monospace;letter-spacing:1.2px;color:#111">6</div>
<div class="cd" style="top:180.22px"><b>select</b> <b>count</b>(<r>*</r>) <b>from</b> task</div>
<div style="position:absolute;left:570px;width:36px;text-align:right;top:198.60px;font:10px/1 'Liberation Mono',monospace;letter-spacing:1.2px;color:#111">7</div>
<div style="position:absolute;left:570px;width:36px;text-align:right;top:214.60px;font:10px/1 'Liberation Mono',monospace;letter-spacing:1.2px;color:#111">8</div>
<div class="cd" style="top:212.22px"><b>select</b> <r>distinct</r> type <b>from</b> task</div>
<div style="position:absolute;left:570px;width:36px;text-align:right;top:230.60px;font:10px/1 'Liberation Mono',monospace;letter-spacing:1.2px;color:#111">9</div>
<div style="position:absolute;left:570px;width:36px;text-align:right;top:246.60px;font:10px/1 'Liberation Mono',monospace;letter-spacing:1.2px;color:#111">10</div>
<div style="position:absolute;left:570px;width:36px;text-align:right;top:262.60px;font:10px/1 'Liberation Mono',monospace;letter-spacing:1.2px;color:#111">11</div>
<div style="position:absolute;left:570px;width:36px;text-align:right;top:278.60px;font:10px/1 'Liberation Mono',monospace;letter-spacing:1.2px;color:#111">12</div>
<div style="position:absolute;left:570px;width:36px;text-align:right;top:294.60px;font:10px/1 'Liberation Mono',monospace;letter-spacing:1.2px;color:#111">13</div>
<div style="position:absolute;left:570px;width:36px;text-align:right;top:310.60px;font:10px/1 'Liberation Mono',monospace;letter-spacing:1.2px;color:#111">14</div>
<div style="position:absolute;left:570px;width:36px;text-align:right;top:326.60px;font:10px/1 'Liberation Mono',monospace;letter-spacing:1.2px;color:#111">15</div>
<div style="position:absolute;left:570px;width:36px;text-align:right;top:342.60px;font:10px/1 'Liberation Mono',monospace;letter-spacing:1.2px;color:#111">16</div>
<div style="position:absolute;left:570px;width:36px;text-align:right;top:358.60px;font:10px/1 'Liberation Mono',monospace;letter-spacing:1.2px;color:#111">17</div>
<div style="position:absolute;left:570px;width:36px;text-align:right;top:374.60px;font:10px/1 'Liberation Mono',monospace;letter-spacing:1.2px;color:#111">18</div>
<div style="position:absolute;left:570px;width:36px;text-align:right;top:390.60px;font:10px/1 'Liberation Mono',monospace;letter-spacing:1.2px;color:#111">19</div>
<div style="position:absolute;left:570px;width:36px;text-align:right;top:406.60px;font:10px/1 'Liberation Mono',monospace;letter-spacing:1.2px;color:#111">20</div>
<div style="position:absolute;left:570px;width:36px;text-align:right;top:422.60px;font:10px/1 'Liberation Mono',monospace;letter-spacing:1.2px;color:#111">21</div>
<div style="position:absolute;left:570px;width:36px;text-align:right;top:438.60px;font:10px/1 'Liberation Mono',monospace;letter-spacing:1.2px;color:#111">22</div>
<div style="position:absolute;left:570px;width:36px;text-align:right;top:454.60px;font:10px/1 'Liberation Mono',monospace;letter-spacing:1.2px;color:#111">23</div>
<div style="position:absolute;left:606px;top:484px;width:1066px;height:15px;background:#c0c0c0;border-top:2px solid #606060;border-left:2px solid #606060"></div>
<div style="position:absolute;left:606px;top:499px;width:1066px;height:2px;background:#fdfdfd"></div>
<div style="position:absolute;left:874.15px;top:486.05px;font:11px/1 'Liberation Sans',sans-serif;color:#111;white-space:pre;transform:scaleX(1.0313);transform-origin:0 0;-webkit-text-stroke:0.12px #111">48/133</div>
<div style="position:absolute;left:931.8px;top:486.05px;font:11px/1 'Liberation Sans',sans-serif;color:#111;white-space:pre;transform:scaleX(0.9528);transform-origin:0 0;-webkit-text-stroke:0.12px #111">Ln. 4 Col. 1</div>
<div style="position:absolute;left:1008.8px;top:486.05px;font:11px/1 'Liberation Sans',sans-serif;color:#111;white-space:pre;transform:scaleX(0.9681);transform-origin:0 0;-webkit-text-stroke:0.12px #111">Lines: 8</div>
<div style="position:absolute;left:1065.6000000000001px;top:486.05px;font:11px/1 'Liberation Sans',sans-serif;color:#111;white-space:pre;transform:scaleX(0.8122);transform-origin:0 0;-webkit-text-stroke:0.12px #111">INSERT</div>
<div style="position:absolute;left:1111.2px;top:486.05px;font:11px/1 'Liberation Sans',sans-serif;color:#111;white-space:pre;transform:scaleX(0.8752);transform-origin:0 0;-webkit-text-stroke:0.12px #111">WRITABLE</div>
<div style="position:absolute;left:1165.1000000000001px;top:486.05px;font:11px/1 'Liberation Sans',sans-serif;color:#111;white-space:pre;transform:scaleX(1.1882);transform-origin:0 0;-webkit-text-stroke:0.12px #111">\n</div>
<div style="position:absolute;left:1184.3000000000002px;top:486.05px;font:11px/1 'Liberation Sans',sans-serif;color:#111;white-space:pre;transform:scaleX(0.9388);transform-origin:0 0;-webkit-text-stroke:0.12px #111">MacRoman</div>
<div style="position:absolute;left:1244.9px;top:486.05px;font:11px/1 'Liberation Sans',sans-serif;color:#111;white-space:pre;transform:scaleX(0.9455);transform-origin:0 0;-webkit-text-stroke:0.12px #111">Sel. Chars: 26</div>
<div style="position:absolute;left:1319.5px;top:486.05px;font:11px/1 'Liberation Sans',sans-serif;color:#111;white-space:pre;transform:scaleX(1.0388);transform-origin:0 0;-webkit-text-stroke:0.12px #111">Delimiter: ;</div>
<svg style="left:1128px;top:503px" width="6" height="4"><path d="M0 3.5L3 0.5L6 3.5Z" fill="#8a8a8a"/></svg>
<svg style="left:573px;top:531px" width="6" height="4"><path d="M0 3.5L3 0.5L6 3.5Z" fill="#8a8a8a"/></svg>
<div style="position:absolute;left:592px;top:526px;width:1078px;height:403px;background:#e6e6e6;border:1px solid #c6c6c6;border-radius:5px"></div>
<div style="position:absolute;left:839px;top:514px;width:584px;height:21px;background:linear-gradient(#ffffff,#f0f0f0);border:1px solid #a5a5a5;border-radius:4px"></div>
<div style="position:absolute;left:1350px;top:514px;width:73px;height:21px;background:linear-gradient(#9a9a9a,#8a8a8a);border:1px solid #7e7e7e;border-left:none;border-radius:0 4px 4px 0"></div>
<svg style="left:849px;top:519px" width="10" height="10"><rect x="0.6" y="0.6" width="8.8" height="8.8" rx="1.5" fill="none" stroke="#111" stroke-width="1.2"/><path d="M2.5 2.5L7.5 7.5M7.5 2.5L2.5 7.5" stroke="#111" stroke-width="1"/></svg>
<div style="position:absolute;left:865px;top:517.74px;font:12px/1 'Liberation Sans',sans-serif;color:#111;white-space:pre;letter-spacing:0.25px;word-spacing:1.5px">task</div>
<svg style="left:911.8px;top:519px" width="10" height="10"><rect x="0.6" y="0.6" width="8.8" height="8.8" rx="1.5" fill="none" stroke="#111" stroke-width="1.2"/><path d="M2.5 2.5L7.5 7.5M7.5 2.5L2.5 7.5" stroke="#111" stroke-width="1"/></svg>
<div style="position:absolute;left:928.2px;top:517.74px;font:12px/1 'Liberation Sans',sans-serif;color:#111;white-space:pre;letter-spacing:0.25px;word-spacing:1.5px">task 2</div>
<svg style="left:986.8px;top:519px" width="10" height="10"><rect x="0.6" y="0.6" width="8.8" height="8.8" rx="1.5" fill="none" stroke="#111" stroke-width="1.2"/><path d="M2.5 2.5L7.5 7.5M7.5 2.5L2.5 7.5" stroke="#111" stroke-width="1"/></svg>
<div style="position:absolute;left:1003.2px;top:517.74px;font:12px/1 'Liberation Sans',sans-serif;color:#111;white-space:pre;letter-spacing:0.25px;word-spacing:1.5px">task 3</div>
<svg style="left:1061.8px;top:519px" width="10" height="10"><rect x="0.6" y="0.6" width="8.8" height="8.8" rx="1.5" fill="none" stroke="#111" stroke-width="1.2"/><path d="M2.5 2.5L7.5 7.5M7.5 2.5L2.5 7.5" stroke="#111" stroke-width="1"/></svg>
<div style="position:absolute;left:1078.2px;top:517.74px;font:12px/1 'Liberation Sans',sans-serif;color:#111;white-space:pre;letter-spacing:0.25px;word-spacing:1.5px">task 4</div>
<svg style="left:1136.8px;top:519px" width="10" height="10"><rect x="0.6" y="0.6" width="8.8" height="8.8" rx="1.5" fill="none" stroke="#111" stroke-width="1.2"/><path d="M2.5 2.5L7.5 7.5M7.5 2.5L2.5 7.5" stroke="#111" stroke-width="1"/></svg>
<div style="position:absolute;left:1153.2px;top:517.74px;font:12px/1 'Liberation Sans',sans-serif;color:#111;white-space:pre;letter-spacing:0.25px;word-spacing:1.5px">task 5</div>
<svg style="left:1211.8px;top:519px" width="10" height="10"><rect x="0.6" y="0.6" width="8.8" height="8.8" rx="1.5" fill="none" stroke="#111" stroke-width="1.2"/><path d="M2.5 2.5L7.5 7.5M7.5 2.5L2.5 7.5" stroke="#111" stroke-width="1"/></svg>
<div style="position:absolute;left:1228.2px;top:517.74px;font:12px/1 'Liberation Sans',sans-serif;color:#111;white-space:pre;letter-spacing:0.25px;word-spacing:1.5px">task 6</div>
<svg style="left:1286.8px;top:519px" width="10" height="10"><rect x="0.6" y="0.6" width="8.8" height="8.8" rx="1.5" fill="none" stroke="#111" stroke-width="1.2"/><path d="M2.5 2.5L7.5 7.5M7.5 2.5L2.5 7.5" stroke="#111" stroke-width="1"/></svg>
<div style="position:absolute;left:1303.2px;top:517.74px;font:12px/1 'Liberation Sans',sans-serif;color:#111;white-space:pre;letter-spacing:0.25px;word-spacing:1.5px">task 7</div>
<svg style="left:1361.8px;top:519px" width="10" height="10"><rect x="0.6" y="0.6" width="8.8" height="8.8" rx="1.5" fill="none" stroke="#111" stroke-width="1.2"/><path d="M2.5 2.5L7.5 7.5M7.5 2.5L2.5 7.5" stroke="#111" stroke-width="1"/></svg>
<div style="position:absolute;left:1378.2px;top:517.74px;font:12px/1 'Liberation Sans',sans-serif;color:#111;white-space:pre;letter-spacing:0.25px;word-spacing:1.5px">task 8</div>
<div style="position:absolute;left:899px;top:517px;width:1px;height:15px;background:#c8c8c8"></div>
<div style="position:absolute;left:974px;top:517px;width:1px;height:15px;background:#c8c8c8"></div>
<div style="position:absolute;left:1049px;top:517px;width:1px;height:15px;background:#c8c8c8"></div>
<div style="position:absolute;left:1124px;top:517px;width:1px;height:15px;background:#c8c8c8"></div>
<div style="position:absolute;left:1199px;top:517px;width:1px;height:15px;background:#c8c8c8"></div>
<div style="position:absolute;left:1274px;top:517px;width:1px;height:15px;background:#c8c8c8"></div>
<div style="position:absolute;left:601px;top:542px;width:68px;height:16px;background:linear-gradient(#fefefe,#ececec);border-left:1px solid #b0b0b0;border-right:1px solid #b0b0b0"></div>
<div style="position:absolute;left:614px;top:543.04px;font:11px/1 'Liberation Sans',sans-serif;color:#111;white-space:pre;transform:scaleX(1.0002);transform-origin:0 0;-webkit-text-stroke:0.12px #111">OFF</div>
<div style="position:absolute;left:1022px;top:542px;width:138px;height:16px;background:#fff;border:1px solid #b6b6b6"></div>
<svg style="left:657px;top:544px" width="6" height="11" viewBox="0 0 6 11"><path d="M0 3.5L2.5 0L5 3.5Z M0 6.5L2.5 10L5 6.5Z" fill="#333"/></svg>
<svg style="left:682px;top:543px" width="15" height="15" viewBox="0 0 15 15"><rect x="0.5" y="0.5" width="14" height="14" rx="1.5" fill="url(#sav)" stroke="#5b6ea8"/><path d="M3.5 0.5V6.5Q3.5 7.5 4.5 7.5H10.5Q11.5 7.5 11.5 6.5V0.5" fill="#eef2d8" stroke="#6878b0"/><rect x="4.5" y="9.5" width="6" height="5" fill="#e8eef8" stroke="#5b6ea8"/><rect x="6" y="11" width="2" height="3.5" fill="#8a9ccc"/></svg>
<svg style="left:708px;top:543px" width="15" height="15" viewBox="0 0 15 15"><path d="M2 1.5H14M5 5.5H14M8 9.5H14" stroke="#1c5a9a" stroke-width="1.7"/><path d="M0.8 14.2L1.6 11.4L9.6 4L11.4 5.8L3.6 13.4Z" fill="#f4cc6c" stroke="#9c7424" stroke-width="0.9"/><path d="M0.8 14.2L1.6 11.4L3.6 13.4Z" fill="#222"/></svg>
<svg style="left:745px;top:542px" width="16" height="17" viewBox="0 0 16 17"><path d="M9.5 1L14 6.5L11 6.5L11.5 9.5L9 8L7 10L5.5 6.5L6.5 5.5Z" fill="#c8f8c0" stroke="#10a010" stroke-width="1"/><path d="M5.5 15.5L1 9.5L4 9.5L3.5 6.5L6 8L8 6L9.5 9.5L8.5 10.5Z" fill="#a8f0a0" stroke="#10a010" stroke-width="1"/></svg>
<svg style="left:769px;top:544px" width="17" height="11" viewBox="0 0 17 11"><path d="M0.8 7Q0.8 5 3.5 5Q6.3 5 6.3 7.4Q6.3 9.8 3.5 9.8Q0.8 9.8 0.8 7Z M6.3 7Q6.3 5 9 5Q11.9 5 11.9 7.4Q11.9 9.8 9 9.8Q6.3 9.8 6.3 7Z M1.2 5.6L4.2 1.6Q5.8 0.4 6.3 3M10.5 5.4L13.5 2Q15.3 0.8 15.8 3.4" fill="none" stroke="#283040" stroke-width="1.25"/></svg>
<svg style="left:794px;top:543px" width="15" height="15" viewBox="0 0 15 15"><path d="M0.8 9.5L1.6 7L8.5 0.5L10 2L3.2 8.6Z" fill="#f4cc6c" stroke="#9c7424" stroke-width="0.9"/><path d="M0.8 9.5L1.6 7L3.2 8.6Z" fill="#222"/><path d="M5.5 8.5H10V6.5L14.5 10.5L10 14.5V12.5H5.5Z" fill="#a0d0d0" stroke="#2a70a0" stroke-width="0.9"/></svg>
<svg style="left:818px;top:544px" width="16" height="13" viewBox="0 0 16 13"><path d="M0.5 4.5H4V2.5L7.5 6L4 9.5V7.5H0.5Z" fill="url(#yel)" stroke="#b08820" stroke-width="0.9"/><path d="M10 2V11.5H12M10 6.5H12" stroke="#4a70a8"/><rect x="8.5" y="0.5" width="3" height="2.5" fill="#c8d8f0" stroke="#4a70a8" stroke-width="0.8"/><rect x="12" y="5" width="3" height="3" fill="#c8d8f0" stroke="#4a70a8" stroke-width="0.8"/><rect x="12" y="10" width="3" height="3" fill="#c8d8f0" stroke="#4a70a8" stroke-width="0.8"/><path d="M13 1.5H15.5" stroke="#4a70a8"/></svg>
<svg style="left:842px;top:543px" width="15" height="15" viewBox="0 0 15 15"><path d="M2.5 0.5H5.5V5H8L4 9L0 5H2.5Z" fill="url(#yel)" stroke="#b08820" stroke-width="0.9"/><path d="M9.5 14.5H12.5V10H15L11 6L7 10H9.5Z" fill="url(#yel)" stroke="#b08820" stroke-width="0.9"/></svg>
<svg style="left:866px;top:542px" width="16" height="16" viewBox="0 0 16 16"><path d="M4.5 3.5H11L14.5 7V15.5H4.5Z" fill="#fdfbf0" stroke="#a88c50"/><path d="M9 10.5H13M9 12.5H13" stroke="#8aa0c0"/><rect x="0.5" y="0.5" width="8" height="4.5" fill="#fff" stroke="#4a80b0"/><path d="M2.5 2.8h1M4.5 2.8h1M6.5 2.8h1" stroke="#305080"/><path d="M1.5 5.5Q1.5 10.5 6.5 10.5V8.5L10 11.5L6.5 14.5V12.5Q-0.5 12.5 0 5.5Z" fill="#78b4dc" stroke="#1f5898" stroke-width="0.9"/></svg>
<svg style="left:891px;top:543px" width="13" height="15" viewBox="0 0 13 15"><rect x="0.5" y="0.5" width="12" height="7" fill="#f6fbfb" stroke="#8393a6"/><rect x="0.5" y="7.5" width="12" height="7" fill="#eef6f8" stroke="#8393a6"/><rect x="2" y="2.2" width="3" height="3" fill="#2c9c60"/><rect x="2" y="9.5" width="3" height="3" fill="#70808c"/><path d="M6.5 3.7H11M6.5 11H11" stroke="#3c5c5c"/></svg>
<svg style="left:914px;top:543px" width="14" height="14" viewBox="0 0 14 14"><rect x="0.5" y="0.5" width="13" height="13" fill="#fbfcfd" stroke="#5870a0"/><path d="M1 1H4.5L1 4.5Z" fill="#0c2c60"/><path d="M1 5.5H13M6 3.5H12" stroke="#e8b0a0"/><path d="M6 8.5H12.5M8 10.5H12.5" stroke="#7888a8"/></svg>
<svg style="left:938px;top:543px" width="15" height="15" viewBox="0 0 15 15"><rect x="0.5" y="0.5" width="9" height="12" fill="#fdfbf0" stroke="#a89c70"/><path d="M2 3h5M2 5h5M2 7h5M2 9h5" stroke="#a0a8b8"/><path d="M4.5 2.5H11L14.5 6V14.5H4.5Z" fill="#fdfbf0" stroke="#a89c70"/><path d="M6.5 6.5H12M6.5 8.5H12.5M6.5 10.5H12.5M6.5 12.5H11" stroke="#4a6aa8"/></svg>
<svg style="left:961px;top:543px" width="16" height="15" viewBox="0 0 16 15"><rect x="0.5" y="0.5" width="7" height="8" fill="#fafcfc" stroke="#8890a0"/><path d="M2 2.5h1M4 2.5h2.5M2 4.5h1M4 4.5h2.5M2 6.5h1M4 6.5h2.5" stroke="#405070"/><rect x="8.5" y="6.5" width="7" height="8" fill="#fafcfc" stroke="#8890a0"/><path d="M10 8.5h1M12 8.5h2.5M10 10.5h1M12 10.5h2.5M10 12.5h1M12 12.5h2.5" stroke="#405070"/><path d="M10 0.5Q13 0.5 13 4M11.5 3L13 5L14.5 3M2.5 10Q2.5 13.5 6 13.5M4.5 12L6.5 13.5L4.5 15" fill="none" stroke="#203868" stroke-width="1.1"/></svg>
<svg style="left:997px;top:543px" width="16" height="16" viewBox="0 0 16 16"><path d="M9 2Q11.5 -0.5 14 1.5Q16 4 13.5 6.5L8 11L4.5 7.5Z" fill="#f0b848" stroke="#b88828" stroke-width="0.9"/><path d="M4.5 7.5L8 11L6.5 12.5L3 9Z" fill="#909090" stroke="#707070" stroke-width="0.8"/><path d="M3 9L6.5 12.5Q4 15.5 1 15Q0.5 12 3 9Z" fill="#fff8c0" stroke="#e8d070" stroke-width="0.8"/><path d="M12 3.5l0.8 0.8" stroke="#403020"/></svg>
<svg style="left:1167px;top:544px" width="15" height="13" viewBox="0 0 15 13"><path d="M0.8 3.8H7.5V0.8L14 6.5L7.5 12.2V9.2H0.8Z" fill="url(#yel)" stroke="#b89020" stroke-width="1.1"/></svg>
<svg style="left:1190px;top:542px" width="17" height="16" viewBox="0 0 17 16"><path d="M10.5 0.5H14.5L16.5 2.5V9.5H10.5Z" fill="#f8f8f0" stroke="#909070"/><path d="M12 4h3M12 6.5h3" stroke="#507090"/><rect x="4.5" y="10.5" width="9" height="5" fill="#fff" stroke="#2c6c9c"/><path d="M6.5 13h5" stroke="#2c6c9c"/><path d="M1 11Q0.5 5.5 5.5 5.5V3.5L9.5 7L5.5 10.5V8.5Q3 8.5 1 11Z" fill="#70c040" stroke="#207020" stroke-width="0.9"/></svg>
<svg style="left:1216px;top:543px" width="15" height="16" viewBox="0 0 15 16"><path d="M0.5 2.5H10.5V9L7 14.5H0.5Z" fill="#f8f0a8" stroke="#b09030"/><path d="M2.5 0V3M4.8 0V3M7.1 0V3M9.4 0V3" stroke="#303020" stroke-width="0.8"/><path d="M2 5.5H8.5M2 7.5H8.5M2 9.5H8M2 11.5H6" stroke="#505050"/><path d="M11.5 1V7M8.5 4H14.5" stroke="#d0a020" stroke-width="1.6"/><path d="M7 14.5L10.5 9H7Z" fill="#e8d070"/></svg>
<svg style="left:1240px;top:543px" width="16" height="16" viewBox="0 0 16 16"><rect x="0.5" y="0.5" width="11.5" height="11.5" rx="1.2" fill="url(#sav)" stroke="#6a7cb0"/><path d="M3 0.5V5Q3 6 4 6H8.5Q9.5 6 9.5 5V0.5" fill="#eef2d8" stroke="#7888b8" stroke-width="0.9"/><rect x="3.5" y="8" width="5.5" height="4" fill="#e8eef8" stroke="#6a7cb0" stroke-width="0.9"/><rect x="7" y="13" width="2" height="2" fill="#203880"/><rect x="10" y="13" width="2" height="2" fill="#203880"/><rect x="13" y="13" width="2" height="2" fill="#203880"/></svg>
<svg style="left:1265px;top:543px" width="12" height="15" viewBox="0 0 12 15"><path d="M3.5 0.8H8.5V7.5H11.2L6 14.2L0.8 7.5H3.5Z" fill="url(#yel)" stroke="#b89020" stroke-width="1.1"/></svg>
<div style="position:absolute;left:595px;top:560px;width:1073px;height:366px;background:#fff;border:1px solid #7a7a7a"></div>
<div style="position:absolute;left:596px;top:563px;width:1055px;height:16px;background:linear-gradient(#ffffff,#e4e4e4);border-bottom:1px solid #7a7a7a"></div>
<div style="position:absolute;left:630px;top:563px;width:1px;height:16px;background:#8a8a8a"></div>
<div style="position:absolute;left:633.9px;top:563.94px;font:12px/1 'Liberation Sans',sans-serif;color:#111;white-space:pre;transform:scaleX(1.0500);transform-origin:0 0;-webkit-text-stroke:0.12px #111">ID</div>
<div style="position:absolute;left:789px;top:564px;width:1px;height:15px;background:#b4b4b4"></div>
<div style="position:absolute;left:792.9px;top:563.94px;font:12px/1 'Liberation Sans',sans-serif;color:#111;white-space:pre;transform:scaleX(0.9439);transform-origin:0 0;-webkit-text-stroke:0.12px #111">RECORDTYPEID</div>
<div style="position:absolute;left:895px;top:564px;width:1px;height:15px;background:#b4b4b4"></div>
<div style="position:absolute;left:898.9px;top:563.94px;font:12px/1 'Liberation Sans',sans-serif;color:#111;white-space:pre;transform:scaleX(0.9440);transform-origin:0 0;-webkit-text-stroke:0.12px #111">WHOID</div>
<div style="position:absolute;left:1060px;top:564px;width:1px;height:15px;background:#b4b4b4"></div>
<div style="position:absolute;left:1063.9px;top:563.94px;font:12px/1 'Liberation Sans',sans-serif;color:#111;white-space:pre;transform:scaleX(1.0251);transform-origin:0 0;-webkit-text-stroke:0.12px #111">WHATID</div>
<div style="position:absolute;left:1220px;top:564px;width:1px;height:15px;background:#b4b4b4"></div>
<div style="position:absolute;left:1223.9px;top:563.94px;font:12px/1 'Liberation Sans',sans-serif;color:#111;white-space:pre;transform:scaleX(0.8742);transform-origin:0 0;-webkit-text-stroke:0.12px #111">SUBJECT</div>
<div style="position:absolute;left:1630px;top:564px;width:1px;height:15px;background:#b4b4b4"></div>
<div style="position:absolute;left:1633.9px;top:563.94px;font:12px/1 'Liberation Sans',sans-serif;color:#111;white-space:pre;transform:scaleX(0.9440);transform-origin:0 0;-webkit-text-stroke:0.12px #111">AC</div>
<div style="position:absolute;left:597px;top:579px;width:33px;height:14px;background:#bebebe"></div>
<div style="position:absolute;left:599px;top:579.74px;font:13px/1 'Liberation Sans',sans-serif;color:#111;white-space:pre;">1</div>
<div style="position:absolute;left:631px;top:579px;width:1020px;height:14px;background:#fff"></div>
<div style="position:absolute;left:631.8px;top:579.74px;font:13px/1 'Liberation Sans',sans-serif;color:#111;white-space:pre;transform:scaleX(1.0190);transform-origin:0 0;-webkit-text-stroke:0.12px #111">00T3000000L0RknEAF</div>
<div style="position:absolute;left:790px;top:579px;width:105px;height:14px;background:#fdd0f0"></div>
<div style="position:absolute;left:896px;top:579px;width:164px;height:14px;background:#fdd0f0"></div>
<div style="position:absolute;left:1061px;top:579px;width:159px;height:14px;background:#fdd0f0"></div>
<div style="position:absolute;left:1221.8px;top:579.74px;font:13px/1 'Liberation Sans',sans-serif;color:#111;white-space:pre;transform:scaleX(0.9610);transform-origin:0 0;-webkit-text-stroke:0.12px #111">Get Massage</div>
<div style="position:absolute;left:1631.8px;top:579.74px;font:13px/1 'Liberation Sans',sans-serif;color:#111;white-space:pre;">200</div>
<div style="position:absolute;left:631px;top:593px;width:1020px;height:1px;background:#c8c8c8"></div>
<div style="position:absolute;left:597px;top:594px;width:33px;height:14px;background:#bebebe"></div>
<div style="position:absolute;left:599px;top:594.74px;font:13px/1 'Liberation Sans',sans-serif;color:#111;white-space:pre;">2</div>
<div style="position:absolute;left:631px;top:594px;width:1020px;height:14px;background:#ebebeb"></div>
<div style="position:absolute;left:631.8px;top:594.74px;font:13px/1 'Liberation Sans',sans-serif;color:#111;white-space:pre;transform:scaleX(1.0190);transform-origin:0 0;-webkit-text-stroke:0.12px #111">00T3000000L0RqSEAV</div>
<div style="position:absolute;left:790px;top:594px;width:105px;height:14px;background:#fdd0f0"></div>
<div style="position:absolute;left:896px;top:594px;width:164px;height:14px;background:#fdd0f0"></div>
<div style="position:absolute;left:1061px;top:594px;width:159px;height:14px;background:#fdd0f0"></div>
<div style="position:absolute;left:1221.8px;top:594.74px;font:13px/1 'Liberation Sans',sans-serif;color:#111;white-space:pre;transform:scaleX(0.8985);transform-origin:0 0;-webkit-text-stroke:0.12px #111">Give Jenn a BIG RAISE</div>
<div style="position:absolute;left:1631.8px;top:594.74px;font:13px/1 'Liberation Sans',sans-serif;color:#111;white-space:pre;">200</div>
<div style="position:absolute;left:631px;top:608px;width:1020px;height:1px;background:#c8c8c8"></div>
<div style="position:absolute;left:597px;top:609px;width:33px;height:14px;background:#bebebe"></div>
<div style="position:absolute;left:599px;top:609.74px;font:13px/1 'Liberation Sans',sans-serif;color:#111;white-space:pre;">3</div>
<div style="position:absolute;left:631px;top:609px;width:1020px;height:14px;background:#fff"></div>
<div style="position:absolute;left:631.8px;top:609.74px;font:13px/1 'Liberation Sans',sans-serif;color:#111;white-space:pre;transform:scaleX(1.0190);transform-origin:0 0;-webkit-text-stroke:0.12px #111">00T3000000OiyJgEAJ</div>
<div style="position:absolute;left:790px;top:609px;width:105px;height:14px;background:#fdd0f0"></div>
<div style="position:absolute;left:896.8px;top:609.74px;font:13px/1 'Liberation Sans',sans-serif;color:#111;white-space:pre;transform:scaleX(1.0107);transform-origin:0 0;-webkit-text-stroke:0.12px #111">0033000000GmXHJAA3</div>
<div style="position:absolute;left:1061.8px;top:609.74px;font:13px/1 'Liberation Sans',sans-serif;color:#111;white-space:pre;transform:scaleX(1.0519);transform-origin:0 0;-webkit-text-stroke:0.12px #111">006300000058wgmAAA</div>
<div style="position:absolute;left:1221.8px;top:609.74px;font:13px/1 'Liberation Sans',sans-serif;color:#111;white-space:pre;transform:scaleX(1.0128);transform-origin:0 0;-webkit-text-stroke:0.12px #111">Check back in to see if she's interested in membership-per RS</div>
<div style="position:absolute;left:1631.8px;top:609.74px;font:13px/1 'Liberation Sans',sans-serif;color:#111;white-space:pre;">200</div>
<div style="position:absolute;left:631px;top:623px;width:1020px;height:1px;background:#c8c8c8"></div>
<div style="position:absolute;left:597px;top:624px;width:33px;height:14px;background:#bebebe"></div>
<div style="position:absolute;left:599px;top:624.74px;font:13px/1 'Liberation Sans',sans-serif;color:#111;white-space:pre;">4</div>
<div style="position:absolute;left:631px;top:624px;width:1020px;height:14px;background:#ebebeb"></div>
<div style="position:absolute;left:631.8px;top:624.74px;font:13px/1 'Liberation Sans',sans-serif;color:#111;white-space:pre;transform:scaleX(1.0190);transform-origin:0 0;-webkit-text-stroke:0.12px #111">00T3000000P3LopEAF</div>
<div style="position:absolute;left:790px;top:624px;width:105px;height:14px;background:#fdd0f0"></div>
<div style="position:absolute;left:896.8px;top:624.74px;font:13px/1 'Liberation Sans',sans-serif;color:#111;white-space:pre;transform:scaleX(1.0232);transform-origin:0 0;-webkit-text-stroke:0.12px #111">0033000000GmXKnAAN</div>
<div style="position:absolute;left:1061.8px;top:624.74px;font:13px/1 'Liberation Sans',sans-serif;color:#111;white-space:pre;transform:scaleX(1.0490);transform-origin:0 0;-webkit-text-stroke:0.12px #111">006300000058yKhAAI</div>
<div style="position:absolute;left:1221.8px;top:624.74px;font:13px/1 'Liberation Sans',sans-serif;color:#111;white-space:pre;transform:scaleX(1.0075);transform-origin:0 0;-webkit-text-stroke:0.12px #111">Follow-up on nomination</div>
<div style="position:absolute;left:1631.8px;top:624.74px;font:13px/1 'Liberation Sans',sans-serif;color:#111;white-space:pre;">200</div>
<div style="position:absolute;left:631px;top:638px;width:1020px;height:1px;background:#c8c8c8"></div>
<div style="position:absolute;left:597px;top:639px;width:33px;height:14px;background:#bebebe"></div>
<div style="position:absolute;left:599px;top:639.74px;font:13px/1 'Liberation Sans',sans-serif;color:#111;white-space:pre;">5</div>
<div style="position:absolute;left:631px;top:639px;width:1020px;height:14px;background:#fff"></div>
<div style="position:absolute;left:631.8px;top:639.74px;font:13px/1 'Liberation Sans',sans-serif;color:#111;white-space:pre;transform:scaleX(1.0190);transform-origin:0 0;-webkit-text-stroke:0.12px #111">00T3000000P3N4pEAF</div>
<div style="position:absolute;left:790px;top:639px;width:105px;height:14px;background:#fdd0f0"></div>
<div style="position:absolute;left:896.8px;top:639.74px;font:13px/1 'Liberation Sans',sans-serif;color:#111;white-space:pre;transform:scaleX(1.0250);transform-origin:0 0;-webkit-text-stroke:0.12px #111">0033000000GmXHnAAN</div>
<div style="position:absolute;left:1061.8px;top:639.74px;font:13px/1 'Liberation Sans',sans-serif;color:#111;white-space:pre;transform:scaleX(1.0626);transform-origin:0 0;-webkit-text-stroke:0.12px #111">006300000058xlaAAA</div>
<div style="position:absolute;left:1221.8px;top:639.74px;font:13px/1 'Liberation Sans',sans-serif;color:#111;white-space:pre;transform:scaleX(1.0319);transform-origin:0 0;-webkit-text-stroke:0.12px #111">Need update from Bain - gave go ahead 1/25</div>
<div style="position:absolute;left:1631.8px;top:639.74px;font:13px/1 'Liberation Sans',sans-serif;color:#111;white-space:pre;">200</div>
<div style="position:absolute;left:631px;top:653px;width:1020px;height:1px;background:#c8c8c8"></div>
<div style="position:absolute;left:597px;top:654px;width:33px;height:14px;background:#bebebe"></div>
<div style="position:absolute;left:599px;top:654.74px;font:13px/1 'Liberation Sans',sans-serif;color:#111;white-space:pre;">6</div>
<div style="position:absolute;left:631px;top:654px;width:1020px;height:14px;background:#ebebeb"></div>
<div style="position:absolute;left:631.8px;top:654.74px;font:13px/1 'Liberation Sans',sans-serif;color:#111;white-space:pre;transform:scaleX(1.0190);transform-origin:0 0;-webkit-text-stroke:0.12px #111">00T3000000P3tuvEAB</div>
<div style="position:absolute;left:790px;top:654px;width:105px;height:14px;background:#fdd0f0"></div>
<div style="position:absolute;left:896.8px;top:654.74px;font:13px/1 'Liberation Sans',sans-serif;color:#111;white-space:pre;transform:scaleX(1.0251);transform-origin:0 0;-webkit-text-stroke:0.12px #111">0033000000H9aNBAAZ</div>
<div style="position:absolute;left:1061.8px;top:654.74px;font:13px/1 'Liberation Sans',sans-serif;color:#111;white-space:pre;transform:scaleX(1.0376);transform-origin:0 0;-webkit-text-stroke:0.12px #111">00630000005QgzhAAC</div>
<div style="position:absolute;left:1221.8px;top:654.74px;font:13px/1 'Liberation Sans',sans-serif;color:#111;white-space:pre;transform:scaleX(1.0233);transform-origin:0 0;-webkit-text-stroke:0.12px #111">Check-in w/ Ed - can he join this year?</div>
<div style="position:absolute;left:1631.8px;top:654.74px;font:13px/1 'Liberation Sans',sans-serif;color:#111;white-space:pre;">200</div>
<div style="position:absolute;left:631px;top:668px;width:1020px;height:1px;background:#c8c8c8"></div>
<div style="position:absolute;left:597px;top:669px;width:33px;height:14px;background:#bebebe"></div>
<div style="position:absolute;left:599px;top:669.74px;font:13px/1 'Liberation Sans',sans-serif;color:#111;white-space:pre;">7</div>
<div style="position:absolute;left:631px;top:669px;width:1020px;height:14px;background:#fff"></div>
<div style="position:absolute;left:631.8px;top:669.74px;font:13px/1 'Liberation Sans',sans-serif;color:#111;white-space:pre;transform:scaleX(1.0190);transform-origin:0 0;-webkit-text-stroke:0.12px #111">00T3000000P3yrbEAB</div>
<div style="position:absolute;left:790px;top:669px;width:105px;height:14px;background:#fdd0f0"></div>
<div style="position:absolute;left:896.8px;top:669.74px;font:13px/1 'Liberation Sans',sans-serif;color:#111;white-space:pre;transform:scaleX(1.0142);transform-origin:0 0;-webkit-text-stroke:0.12px #111">0033000000GmXPYAA3</div>
<div style="position:absolute;left:1061.8px;top:669.74px;font:13px/1 'Liberation Sans',sans-serif;color:#111;white-space:pre;transform:scaleX(1.0578);transform-origin:0 0;-webkit-text-stroke:0.12px #111">006300000058ypVAAQ</div>
<div style="position:absolute;left:1221.8px;top:669.74px;font:13px/1 'Liberation Sans',sans-serif;color:#111;white-space:pre;transform:scaleX(1.0298);transform-origin:0 0;-webkit-text-stroke:0.12px #111">Check-in w/ Jeff - couldn't afford last year but was interested</div>
<div style="position:absolute;left:1631.8px;top:669.74px;font:13px/1 'Liberation Sans',sans-serif;color:#111;white-space:pre;">200</div>
<div style="position:absolute;left:631px;top:683px;width:1020px;height:1px;background:#c8c8c8"></div>
<div style="position:absolute;left:597px;top:684px;width:33px;height:14px;background:#bebebe"></div>
<div style="position:absolute;left:599px;top:684.74px;font:13px/1 'Liberation Sans',sans-serif;color:#111;white-space:pre;">8</div>
<div style="position:absolute;left:631px;top:684px;width:1020px;height:14px;background:#ebebeb"></div>
<div style="position:absolute;left:631.8px;top:684.74px;font:13px/1 'Liberation Sans',sans-serif;color:#111;white-space:pre;transform:scaleX(1.0190);transform-origin:0 0;-webkit-text-stroke:0.12px #111">00T3000000P46qnEAB</div>
<div style="position:absolute;left:790px;top:684px;width:105px;height:14px;background:#fdd0f0"></div>
<div style="position:absolute;left:896.8px;top:684.74px;font:13px/1 'Liberation Sans',sans-serif;color:#111;white-space:pre;transform:scaleX(1.0508);transform-origin:0 0;-webkit-text-stroke:0.12px #111">0033000000H9i0pAAB</div>
<div style="position:absolute;left:1061.8px;top:684.74px;font:13px/1 'Liberation Sans',sans-serif;color:#111;white-space:pre;transform:scaleX(1.0284);transform-origin:0 0;-webkit-text-stroke:0.12px #111">00630000005S0bnAAC</div>
<div style="position:absolute;left:1221.8px;top:684.74px;font:13px/1 'Liberation Sans',sans-serif;color:#111;white-space:pre;transform:scaleX(1.0226);transform-origin:0 0;-webkit-text-stroke:0.12px #111">Re-approach about membership this year</div>
<div style="position:absolute;left:1631.8px;top:684.74px;font:13px/1 'Liberation Sans',sans-serif;color:#111;white-space:pre;">200</div>
<div style="position:absolute;left:631px;top:698px;width:1020px;height:1px;background:#c8c8c8"></div>
<div style="position:absolute;left:597px;top:699px;width:33px;height:14px;background:#bebebe"></div>
<div style="position:absolute;left:599px;top:699.74px;font:13px/1 'Liberation Sans',sans-serif;color:#111;white-space:pre;">9</div>
<div style="position:absolute;left:631px;top:699px;width:1020px;height:14px;background:#fff"></div>
<div style="position:absolute;left:631.8px;top:699.74px;font:13px/1 'Liberation Sans',sans-serif;color:#111;white-space:pre;transform:scaleX(1.0190);transform-origin:0 0;-webkit-text-stroke:0.12px #111">00T3000000P47LYEAZ</div>
<div style="position:absolute;left:790px;top:699px;width:105px;height:14px;background:#fdd0f0"></div>
<div style="position:absolute;left:896.8px;top:699.74px;font:13px/1 'Liberation Sans',sans-serif;color:#111;white-space:pre;transform:scaleX(1.0253);transform-origin:0 0;-webkit-text-stroke:0.12px #111">0033000000GmXKmAAN</div>
<div style="position:absolute;left:1061.8px;top:699.74px;font:13px/1 'Liberation Sans',sans-serif;color:#111;white-space:pre;transform:scaleX(1.0739);transform-origin:0 0;-webkit-text-stroke:0.12px #111">006300000058xrqAAA</div>
<div style="position:absolute;left:1221.8px;top:699.74px;font:13px/1 'Liberation Sans',sans-serif;color:#111;white-space:pre;transform:scaleX(1.0174);transform-origin:0 0;-webkit-text-stroke:0.12px #111">Check back to see if good target prospect</div>
<div style="position:absolute;left:1631.8px;top:699.74px;font:13px/1 'Liberation Sans',sans-serif;color:#111;white-space:pre;">200</div>
<div style="position:absolute;left:631px;top:713px;width:1020px;height:1px;background:#c8c8c8"></div>
<div style="position:absolute;left:597px;top:714px;width:33px;height:14px;background:#bebebe"></div>
<div style="position:absolute;left:599px;top:714.74px;font:13px/1 'Liberation Sans',sans-serif;color:#111;white-space:pre;">10</div>
<div style="position:absolute;left:631px;top:714px;width:1020px;height:14px;background:#ebebeb"></div>
<div style="position:absolute;left:631.8px;top:714.74px;font:13px/1 'Liberation Sans',sans-serif;color:#111;white-space:pre;transform:scaleX(1.0190);transform-origin:0 0;-webkit-text-stroke:0.12px #111">00T3000000POeAnEAL</div>
<div style="position:absolute;left:790px;top:714px;width:105px;height:14px;background:#fdd0f0"></div>
<div style="position:absolute;left:896.8px;top:714.74px;font:13px/1 'Liberation Sans',sans-serif;color:#111;white-space:pre;transform:scaleX(1.0214);transform-origin:0 0;-webkit-text-stroke:0.12px #111">0033000000GmXIZAA3</div>
<div style="position:absolute;left:1061.8px;top:714.74px;font:13px/1 'Liberation Sans',sans-serif;color:#111;white-space:pre;transform:scaleX(1.0633);transform-origin:0 0;-webkit-text-stroke:0.12px #111">006300000058xw5AAA</div>
<div style="position:absolute;left:1221.8px;top:714.74px;font:13px/1 'Liberation Sans',sans-serif;color:#111;white-space:pre;transform:scaleX(1.0138);transform-origin:0 0;-webkit-text-stroke:0.12px #111">Check back to see if interested in membership</div>
<div style="position:absolute;left:1631.8px;top:714.74px;font:13px/1 'Liberation Sans',sans-serif;color:#111;white-space:pre;">200</div>
<div style="position:absolute;left:631px;top:728px;width:1020px;height:1px;background:#c8c8c8"></div>
<div style="position:absolute;left:597px;top:729px;width:33px;height:14px;background:#bebebe"></div>
<div style="position:absolute;left:599px;top:729.74px;font:13px/1 'Liberation Sans',sans-serif;color:#111;white-space:pre;">11</div>
<div style="position:absolute;left:631px;top:729px;width:1020px;height:14px;background:#fff"></div>
<div style="position:absolute;left:631.8px;top:729.74px;font:13px/1 'Liberation Sans',sans-serif;color:#111;white-space:pre;transform:scaleX(1.0190);transform-origin:0 0;-webkit-text-stroke:0.12px #111">00T3000000PREZaEAP</div>
<div style="position:absolute;left:790px;top:729px;width:105px;height:14px;background:#fdd0f0"></div>
<div style="position:absolute;left:896.8px;top:729.74px;font:13px/1 'Liberation Sans',sans-serif;color:#111;white-space:pre;transform:scaleX(1.0230);transform-origin:0 0;-webkit-text-stroke:0.12px #111">0033000000GmXOiAAN</div>
<div style="position:absolute;left:1061.8px;top:729.74px;font:13px/1 'Liberation Sans',sans-serif;color:#111;white-space:pre;transform:scaleX(1.0730);transform-origin:0 0;-webkit-text-stroke:0.12px #111">006300000058x9qAAA</div>
<div style="position:absolute;left:1221.8px;top:729.74px;font:13px/1 'Liberation Sans',sans-serif;color:#111;white-space:pre;transform:scaleX(1.0009);transform-origin:0 0;-webkit-text-stroke:0.12px #111">Check nexis to see if they've found a replacement for Cywinski</div>
<div style="position:absolute;left:1631.8px;top:729.74px;font:13px/1 'Liberation Sans',sans-serif;color:#111;white-space:pre;">200</div>
<div style="position:absolute;left:631px;top:743px;width:1020px;height:1px;background:#c8c8c8"></div>
<div style="position:absolute;left:597px;top:744px;width:33px;height:14px;background:#bebebe"></div>
<div style="position:absolute;left:599px;top:744.74px;font:13px/1 'Liberation Sans',sans-serif;color:#111;white-space:pre;">12</div>
<div style="position:absolute;left:631px;top:744px;width:1020px;height:14px;background:#ebebeb"></div>
<div style="position:absolute;left:631.8px;top:744.74px;font:13px/1 'Liberation Sans',sans-serif;color:#111;white-space:pre;transform:scaleX(1.0190);transform-origin:0 0;-webkit-text-stroke:0.12px #111">00T3000000PRR8rEAH</div>
<div style="position:absolute;left:790px;top:744px;width:105px;height:14px;background:#fdd0f0"></div>
<div style="position:absolute;left:896.8px;top:744.74px;font:13px/1 'Liberation Sans',sans-serif;color:#111;white-space:pre;transform:scaleX(0.9904);transform-origin:0 0;-webkit-text-stroke:0.12px #111">0033000000JFhGIAAL</div>
<div style="position:absolute;left:1061.8px;top:744.74px;font:13px/1 'Liberation Sans',sans-serif;color:#111;white-space:pre;transform:scaleX(1.0357);transform-origin:0 0;-webkit-text-stroke:0.12px #111">00630000007A3bZAAS</div>
<div style="position:absolute;left:1221.8px;top:744.74px;font:13px/1 'Liberation Sans',sans-serif;color:#111;white-space:pre;transform:scaleX(0.9831);transform-origin:0 0;-webkit-text-stroke:0.12px #111">Nominated by Shane Freeman at ANZ (HR50)</div>
<div style="position:absolute;left:1631.8px;top:744.74px;font:13px/1 'Liberation Sans',sans-serif;color:#111;white-space:pre;">200</div>
<div style="position:absolute;left:631px;top:758px;width:1020px;height:1px;background:#c8c8c8"></div>
<div style="position:absolute;left:597px;top:759px;width:33px;height:14px;background:#bebebe"></div>
<div style="position:absolute;left:599px;top:759.74px;font:13px/1 'Liberation Sans',sans-serif;color:#111;white-space:pre;">13</div>
<div style="position:absolute;left:631px;top:759px;width:1020px;height:14px;background:#fff"></div>
<div style="position:absolute;left:631.8px;top:759.74px;font:13px/1 'Liberation Sans',sans-serif;color:#111;white-space:pre;transform:scaleX(1.0190);transform-origin:0 0;-webkit-text-stroke:0.12px #111">00T3000000PfvKSEAZ</div>
<div style="position:absolute;left:790px;top:759px;width:105px;height:14px;background:#fdd0f0"></div>
<div style="position:absolute;left:896.8px;top:759.74px;font:13px/1 'Liberation Sans',sans-serif;color:#111;white-space:pre;transform:scaleX(1.0241);transform-origin:0 0;-webkit-text-stroke:0.12px #111">0033000000HirF8AAJ</div>
<div style="position:absolute;left:1061.8px;top:759.74px;font:13px/1 'Liberation Sans',sans-serif;color:#111;white-space:pre;transform:scaleX(1.0454);transform-origin:0 0;-webkit-text-stroke:0.12px #111">00630000005xfWaAAI</div>
<div style="position:absolute;left:1221.8px;top:759.74px;font:13px/1 'Liberation Sans',sans-serif;color:#111;white-space:pre;transform:scaleX(0.9809);transform-origin:0 0;-webkit-text-stroke:0.12px #111">Send email</div>
<div style="position:absolute;left:1631.8px;top:759.74px;font:13px/1 'Liberation Sans',sans-serif;color:#111;white-space:pre;">200</div>
<div style="position:absolute;left:631px;top:773px;width:1020px;height:1px;background:#c8c8c8"></div>
<div style="position:absolute;left:597px;top:774px;width:33px;height:14px;background:#bebebe"></div>
<div style="position:absolute;left:599px;top:774.74px;font:13px/1 'Liberation Sans',sans-serif;color:#111;white-space:pre;">14</div>
<div style="position:absolute;left:631px;top:774px;width:1020px;height:14px;background:#ebebeb"></div>
<div style="position:absolute;left:631.8px;top:774.74px;font:13px/1 'Liberation Sans',sans-serif;color:#111;white-space:pre;transform:scaleX(1.0190);transform-origin:0 0;-webkit-text-stroke:0.12px #111">00T3000000Q8rexEAB</div>
<div style="position:absolute;left:790px;top:774px;width:105px;height:14px;background:#fdd0f0"></div>
<div style="position:absolute;left:896.8px;top:774.74px;font:13px/1 'Liberation Sans',sans-serif;color:#111;white-space:pre;transform:scaleX(1.0076);transform-origin:0 0;-webkit-text-stroke:0.12px #111">0033000000JbvQzAAJ</div>
<div style="position:absolute;left:1061px;top:774px;width:159px;height:14px;background:#fdd0f0"></div>
<div style="position:absolute;left:1221.8px;top:774.74px;font:13px/1 'Liberation Sans',sans-serif;color:#111;white-space:pre;transform:scaleX(1.0151);transform-origin:0 0;-webkit-text-stroke:0.12px #111">Check w/ Leanne - we're going after Owen first</div>
<div style="position:absolute;left:1631.8px;top:774.74px;font:13px/1 'Liberation Sans',sans-serif;color:#111;white-space:pre;">200</div>
<div style="position:absolute;left:631px;top:788px;width:1020px;height:1px;background:#c8c8c8"></div>
<div style="position:absolute;left:597px;top:789px;width:33px;height:14px;background:#bebebe"></div>
<div style="position:absolute;left:599px;top:789.74px;font:13px/1 'Liberation Sans',sans-serif;color:#111;white-space:pre;">15</div>
<div style="position:absolute;left:631px;top:789px;width:1020px;height:14px;background:#fff"></div>
<div style="position:absolute;left:631.8px;top:789.74px;font:13px/1 'Liberation Sans',sans-serif;color:#111;white-space:pre;transform:scaleX(1.0190);transform-origin:0 0;-webkit-text-stroke:0.12px #111">00T3000000Q8rugEAB</div>
<div style="position:absolute;left:790px;top:789px;width:105px;height:14px;background:#fdd0f0"></div>
<div style="position:absolute;left:896.8px;top:789.74px;font:13px/1 'Liberation Sans',sans-serif;color:#111;white-space:pre;transform:scaleX(0.9947);transform-origin:0 0;-webkit-text-stroke:0.12px #111">0033000000JbvRJAAZ</div>
<div style="position:absolute;left:1061px;top:789px;width:159px;height:14px;background:#fdd0f0"></div>
<div style="position:absolute;left:1221.8px;top:789.74px;font:13px/1 'Liberation Sans',sans-serif;color:#111;white-space:pre;transform:scaleX(1.0151);transform-origin:0 0;-webkit-text-stroke:0.12px #111">Check w/ Leanne - we're going after Owen first</div>
<div style="position:absolute;left:1631.8px;top:789.74px;font:13px/1 'Liberation Sans',sans-serif;color:#111;white-space:pre;">200</div>
<div style="position:absolute;left:631px;top:803px;width:1020px;height:1px;background:#c8c8c8"></div>
<div style="position:absolute;left:597px;top:804px;width:33px;height:14px;background:#bebebe"></div>
<div style="position:absolute;left:599px;top:804.74px;font:13px/1 'Liberation Sans',sans-serif;color:#111;white-space:pre;">16</div>
<div style="position:absolute;left:631px;top:804px;width:1020px;height:14px;background:#ebebeb"></div>
<div style="position:absolute;left:631.8px;top:804.74px;font:13px/1 'Liberation Sans',sans-serif;color:#111;white-space:pre;transform:scaleX(1.0190);transform-origin:0 0;-webkit-text-stroke:0.12px #111">00T3000000Q8sauEAB</div>
<div style="position:absolute;left:790px;top:804px;width:105px;height:14px;background:#fdd0f0"></div>
<div style="position:absolute;left:896.8px;top:804.74px;font:13px/1 'Liberation Sans',sans-serif;color:#111;white-space:pre;transform:scaleX(1.0180);transform-origin:0 0;-webkit-text-stroke:0.12px #111">0033000000JbukoAAB</div>
<div style="position:absolute;left:1061.8px;top:804.74px;font:13px/1 'Liberation Sans',sans-serif;color:#111;white-space:pre;transform:scaleX(1.0530);transform-origin:0 0;-webkit-text-stroke:0.12px #111">0013000000C4fFCAAZ</div>
<div style="position:absolute;left:1221.8px;top:804.74px;font:13px/1 'Liberation Sans',sans-serif;color:#111;white-space:pre;transform:scaleX(1.0084);transform-origin:0 0;-webkit-text-stroke:0.12px #111">Check w/ Leanne - we're going after Sheares first</div>
<div style="position:absolute;left:1631.8px;top:804.74px;font:13px/1 'Liberation Sans',sans-serif;color:#111;white-space:pre;">200</div>
<div style="position:absolute;left:631px;top:818px;width:1020px;height:1px;background:#c8c8c8"></div>
<div style="position:absolute;left:597px;top:819px;width:33px;height:14px;background:#bebebe"></div>
<div style="position:absolute;left:599px;top:819.74px;font:13px/1 'Liberation Sans',sans-serif;color:#111;white-space:pre;">17</div>
<div style="position:absolute;left:631px;top:819px;width:1020px;height:14px;background:#fff"></div>
<div style="position:absolute;left:631.8px;top:819.74px;font:13px/1 'Liberation Sans',sans-serif;color:#111;white-space:pre;transform:scaleX(1.0190);transform-origin:0 0;-webkit-text-stroke:0.12px #111">00T3000000QAeJbEAL</div>
<div style="position:absolute;left:790px;top:819px;width:105px;height:14px;background:#fdd0f0"></div>
<div style="position:absolute;left:896.8px;top:819.74px;font:13px/1 'Liberation Sans',sans-serif;color:#111;white-space:pre;transform:scaleX(1.0180);transform-origin:0 0;-webkit-text-stroke:0.12px #111">0033000000Ju9J9AAJ</div>
<div style="position:absolute;left:1061.8px;top:819.74px;font:13px/1 'Liberation Sans',sans-serif;color:#111;white-space:pre;transform:scaleX(1.0530);transform-origin:0 0;-webkit-text-stroke:0.12px #111">00630000007bIQUAA2</div>
<div style="position:absolute;left:1221.8px;top:819.74px;font:13px/1 'Liberation Sans',sans-serif;color:#111;white-space:pre;transform:scaleX(0.9853);transform-origin:0 0;-webkit-text-stroke:0.12px #111">Follow up call</div>
<div style="position:absolute;left:1631.8px;top:819.74px;font:13px/1 'Liberation Sans',sans-serif;color:#111;white-space:pre;">200</div>
<div style="position:absolute;left:631px;top:833px;width:1020px;height:1px;background:#c8c8c8"></div>
<div style="position:absolute;left:597px;top:834px;width:33px;height:14px;background:#bebebe"></div>
<div style="position:absolute;left:599px;top:834.74px;font:13px/1 'Liberation Sans',sans-serif;color:#111;white-space:pre;">18</div>
<div style="position:absolute;left:631px;top:834px;width:1020px;height:14px;background:#ebebeb"></div>
<div style="position:absolute;left:631.8px;top:834.74px;font:13px/1 'Liberation Sans',sans-serif;color:#111;white-space:pre;transform:scaleX(1.0190);transform-origin:0 0;-webkit-text-stroke:0.12px #111">00T3000000QBXPeEAP</div>
<div style="position:absolute;left:790px;top:834px;width:105px;height:14px;background:#fdd0f0"></div>
<div style="position:absolute;left:896.8px;top:834.74px;font:13px/1 'Liberation Sans',sans-serif;color:#111;white-space:pre;transform:scaleX(1.0180);transform-origin:0 0;-webkit-text-stroke:0.12px #111">0033000000Ju9zIAAB</div>
<div style="position:absolute;left:1061.8px;top:834.74px;font:13px/1 'Liberation Sans',sans-serif;color:#111;white-space:pre;transform:scaleX(1.0530);transform-origin:0 0;-webkit-text-stroke:0.12px #111">00630000007bIc2AAE</div>
<div style="position:absolute;left:1221.8px;top:834.74px;font:13px/1 'Liberation Sans',sans-serif;color:#111;white-space:pre;transform:scaleX(1.0081);transform-origin:0 0;-webkit-text-stroke:0.12px #111">Leanne to provide update to Bain</div>
<div style="position:absolute;left:1631.8px;top:834.74px;font:13px/1 'Liberation Sans',sans-serif;color:#111;white-space:pre;">200</div>
<div style="position:absolute;left:631px;top:848px;width:1020px;height:1px;background:#c8c8c8"></div>
<div style="position:absolute;left:597px;top:849px;width:33px;height:14px;background:#bebebe"></div>
<div style="position:absolute;left:599px;top:849.74px;font:13px/1 'Liberation Sans',sans-serif;color:#111;white-space:pre;">19</div>
<div style="position:absolute;left:631px;top:849px;width:1020px;height:14px;background:#fff"></div>
<div style="position:absolute;left:631.8px;top:849.74px;font:13px/1 'Liberation Sans',sans-serif;color:#111;white-space:pre;transform:scaleX(1.0190);transform-origin:0 0;-webkit-text-stroke:0.12px #111">00T3000000QV8CfEAL</div>
<div style="position:absolute;left:790px;top:849px;width:105px;height:14px;background:#fdd0f0"></div>
<div style="position:absolute;left:896.8px;top:849.74px;font:13px/1 'Liberation Sans',sans-serif;color:#111;white-space:pre;transform:scaleX(1.0180);transform-origin:0 0;-webkit-text-stroke:0.12px #111">0033000000GmXM7AAN</div>
<div style="position:absolute;left:1061.8px;top:849.74px;font:13px/1 'Liberation Sans',sans-serif;color:#111;white-space:pre;transform:scaleX(1.0530);transform-origin:0 0;-webkit-text-stroke:0.12px #111">006300000058ympAAA</div>
<div style="position:absolute;left:1221.8px;top:849.74px;font:13px/1 'Liberation Sans',sans-serif;color:#111;white-space:pre;transform:scaleX(1.0022);transform-origin:0 0;-webkit-text-stroke:0.12px #111">Invoice status check - check w/ RS first</div>
<div style="position:absolute;left:1631.8px;top:849.74px;font:13px/1 'Liberation Sans',sans-serif;color:#111;white-space:pre;">200</div>
<div style="position:absolute;left:631px;top:863px;width:1020px;height:1px;background:#c8c8c8"></div>
<div style="position:absolute;left:597px;top:864px;width:33px;height:14px;background:#bebebe"></div>
<div style="position:absolute;left:599px;top:864.74px;font:13px/1 'Liberation Sans',sans-serif;color:#111;white-space:pre;">20</div>
<div style="position:absolute;left:631px;top:864px;width:1020px;height:14px;background:#ebebeb"></div>
<div style="position:absolute;left:631.8px;top:864.74px;font:13px/1 'Liberation Sans',sans-serif;color:#111;white-space:pre;transform:scaleX(1.0190);transform-origin:0 0;-webkit-text-stroke:0.12px #111">00T3000000QV8TjEAL</div>
<div style="position:absolute;left:790px;top:864px;width:105px;height:14px;background:#fdd0f0"></div>
<div style="position:absolute;left:896.8px;top:864.74px;font:13px/1 'Liberation Sans',sans-serif;color:#111;white-space:pre;transform:scaleX(1.0180);transform-origin:0 0;-webkit-text-stroke:0.12px #111">0033000000GmXKPAA3</div>
<div style="position:absolute;left:1061.8px;top:864.74px;font:13px/1 'Liberation Sans',sans-serif;color:#111;white-space:pre;transform:scaleX(1.0530);transform-origin:0 0;-webkit-text-stroke:0.12px #111">006300000058yPzAAI</div>
<div style="position:absolute;left:1221.8px;top:864.74px;font:13px/1 'Liberation Sans',sans-serif;color:#111;white-space:pre;transform:scaleX(1.0015);transform-origin:0 0;-webkit-text-stroke:0.12px #111">Rick to email David &amp; reference Delmonte nomination</div>
<div style="position:absolute;left:1631.8px;top:864.74px;font:13px/1 'Liberation Sans',sans-serif;color:#111;white-space:pre;">200</div>
<div style="position:absolute;left:631px;top:878px;width:1020px;height:1px;background:#c8c8c8"></div>
<div style="position:absolute;left:597px;top:879px;width:33px;height:14px;background:#bebebe"></div>
<div style="position:absolute;left:599px;top:879.74px;font:13px/1 'Liberation Sans',sans-serif;color:#111;white-space:pre;">21</div>
<div style="position:absolute;left:631px;top:879px;width:1020px;height:14px;background:#fff"></div>
<div style="position:absolute;left:631.8px;top:879.74px;font:13px/1 'Liberation Sans',sans-serif;color:#111;white-space:pre;transform:scaleX(1.0190);transform-origin:0 0;-webkit-text-stroke:0.12px #111">00T3000000QV8wsEAD</div>
<div style="position:absolute;left:790px;top:879px;width:105px;height:14px;background:#fdd0f0"></div>
<div style="position:absolute;left:896.8px;top:879.74px;font:13px/1 'Liberation Sans',sans-serif;color:#111;white-space:pre;transform:scaleX(1.0180);transform-origin:0 0;-webkit-text-stroke:0.12px #111">0033000000GmXLXAA3</div>
<div style="position:absolute;left:1061.8px;top:879.74px;font:13px/1 'Liberation Sans',sans-serif;color:#111;white-space:pre;transform:scaleX(1.0530);transform-origin:0 0;-webkit-text-stroke:0.12px #111">006300000058yd5AAA</div>
<div style="position:absolute;left:1221.8px;top:879.74px;font:13px/1 'Liberation Sans',sans-serif;color:#111;white-space:pre;transform:scaleX(1.0166);transform-origin:0 0;-webkit-text-stroke:0.12px #111">Check w/ Kevin Tsujihara</div>
<div style="position:absolute;left:1631.8px;top:879.74px;font:13px/1 'Liberation Sans',sans-serif;color:#111;white-space:pre;">200</div>
<div style="position:absolute;left:631px;top:893px;width:1020px;height:1px;background:#c8c8c8"></div>
<div style="position:absolute;left:597px;top:894px;width:33px;height:14px;background:#bebebe"></div>
<div style="position:absolute;left:599px;top:894.74px;font:13px/1 'Liberation Sans',sans-serif;color:#111;white-space:pre;">22</div>
<div style="position:absolute;left:631px;top:894px;width:1020px;height:14px;background:#ebebeb"></div>
<div style="position:absolute;left:631.8px;top:894.74px;font:13px/1 'Liberation Sans',sans-serif;color:#111;white-space:pre;transform:scaleX(1.0190);transform-origin:0 0;-webkit-text-stroke:0.12px #111">00T3000000QV9FaEAL</div>
<div style="position:absolute;left:790px;top:894px;width:105px;height:14px;background:#fdd0f0"></div>
<div style="position:absolute;left:896.8px;top:894.74px;font:13px/1 'Liberation Sans',sans-serif;color:#111;white-space:pre;transform:scaleX(1.0180);transform-origin:0 0;-webkit-text-stroke:0.12px #111">0033000000GmXMDAA3</div>
<div style="position:absolute;left:1061.8px;top:894.74px;font:13px/1 'Liberation Sans',sans-serif;color:#111;white-space:pre;transform:scaleX(1.0530);transform-origin:0 0;-webkit-text-stroke:0.12px #111">006300000058yhWAAQ</div>
<div style="position:absolute;left:1221.8px;top:894.74px;font:13px/1 'Liberation Sans',sans-serif;color:#111;white-space:pre;transform:scaleX(1.0212);transform-origin:0 0;-webkit-text-stroke:0.12px #111">Need update from David</div>
<div style="position:absolute;left:1631.8px;top:894.74px;font:13px/1 'Liberation Sans',sans-serif;color:#111;white-space:pre;">200</div>
<div style="position:absolute;left:631px;top:908px;width:1020px;height:1px;background:#c8c8c8"></div>
<div style="position:absolute;left:789px;top:579px;width:1px;height:331px;background:#c0c0c0"></div>
<div style="position:absolute;left:895px;top:579px;width:1px;height:331px;background:#c0c0c0"></div>
<div style="position:absolute;left:1060px;top:579px;width:1px;height:331px;background:#c0c0c0"></div>
<div style="position:absolute;left:1220px;top:579px;width:1px;height:331px;background:#c0c0c0"></div>
<div style="position:absolute;left:1630px;top:579px;width:1px;height:331px;background:#c0c0c0"></div>
<div style="position:absolute;left:597px;top:909px;width:33px;height:2px;background:#bebebe"></div>
<div style="position:absolute;left:1651px;top:561px;width:16px;height:364px;background:#fff"></div>
<div style="position:absolute;left:1655px;top:580px;width:8px;height:71px;background:#c3c3c3;border-radius:4px"></div>
<div style="position:absolute;left:596px;top:911px;width:1071px;height:14px;background:#fff"></div>
<div style="position:absolute;left:632px;top:915px;width:105px;height:8px;background:#c3c3c3;border-radius:4px"></div>
<div style="position:absolute;left:583px;top:941px;width:1097px;height:31px;background:#c0c0c0;border-top:2px solid #8c8c8c;border-bottom:1px solid #888"></div>
<div style="position:absolute;left:585px;top:952px;width:11px;height:11px;background:#9a9a9a;border:1px solid #8a8a8a"></div>
<div style="position:absolute;left:603px;top:951.67px;font:11.2px/1 'Liberation Mono',monospace;color:#111;white-space:pre;transform:scaleX(0.8929);transform-origin:0 0">16:25:10:388 Executing Statement . . . Done. Query Time: 5.862</div>
<svg style="left:1232px;top:184px;filter:drop-shadow(0.5px 1.5px 1.2px rgba(0,0,0,0.4))" width="12" height="18"><path d="M1 1L1 14L4 11L6.5 16.5L8.5 15.5L6 10L10 10Z" fill="#000" stroke="#fff" stroke-width="1.2" stroke-linejoin="round"/></svg>
<style>
.fd{width:16px;height:14px;background:linear-gradient(#bcd6ec,#8fb3d3);border:1px solid #6f8fae;border-radius:1px}
.fd:before{content:"";position:absolute;left:1px;top:-3px;width:7px;height:3px;background:#a8c4de;border:1px solid #7a98b6;border-bottom:none;border-radius:2px 2px 0 0}
.cd{position:absolute;left:611px;font:13.3px/1 'Liberation Mono',monospace;color:#111;white-space:pre;transform:scaleX(0.8772);transform-origin:0 0}
.cd b{font-weight:normal;color:#2a2ac4}
.cd r{color:#d42020}
</style>
</body></html>
